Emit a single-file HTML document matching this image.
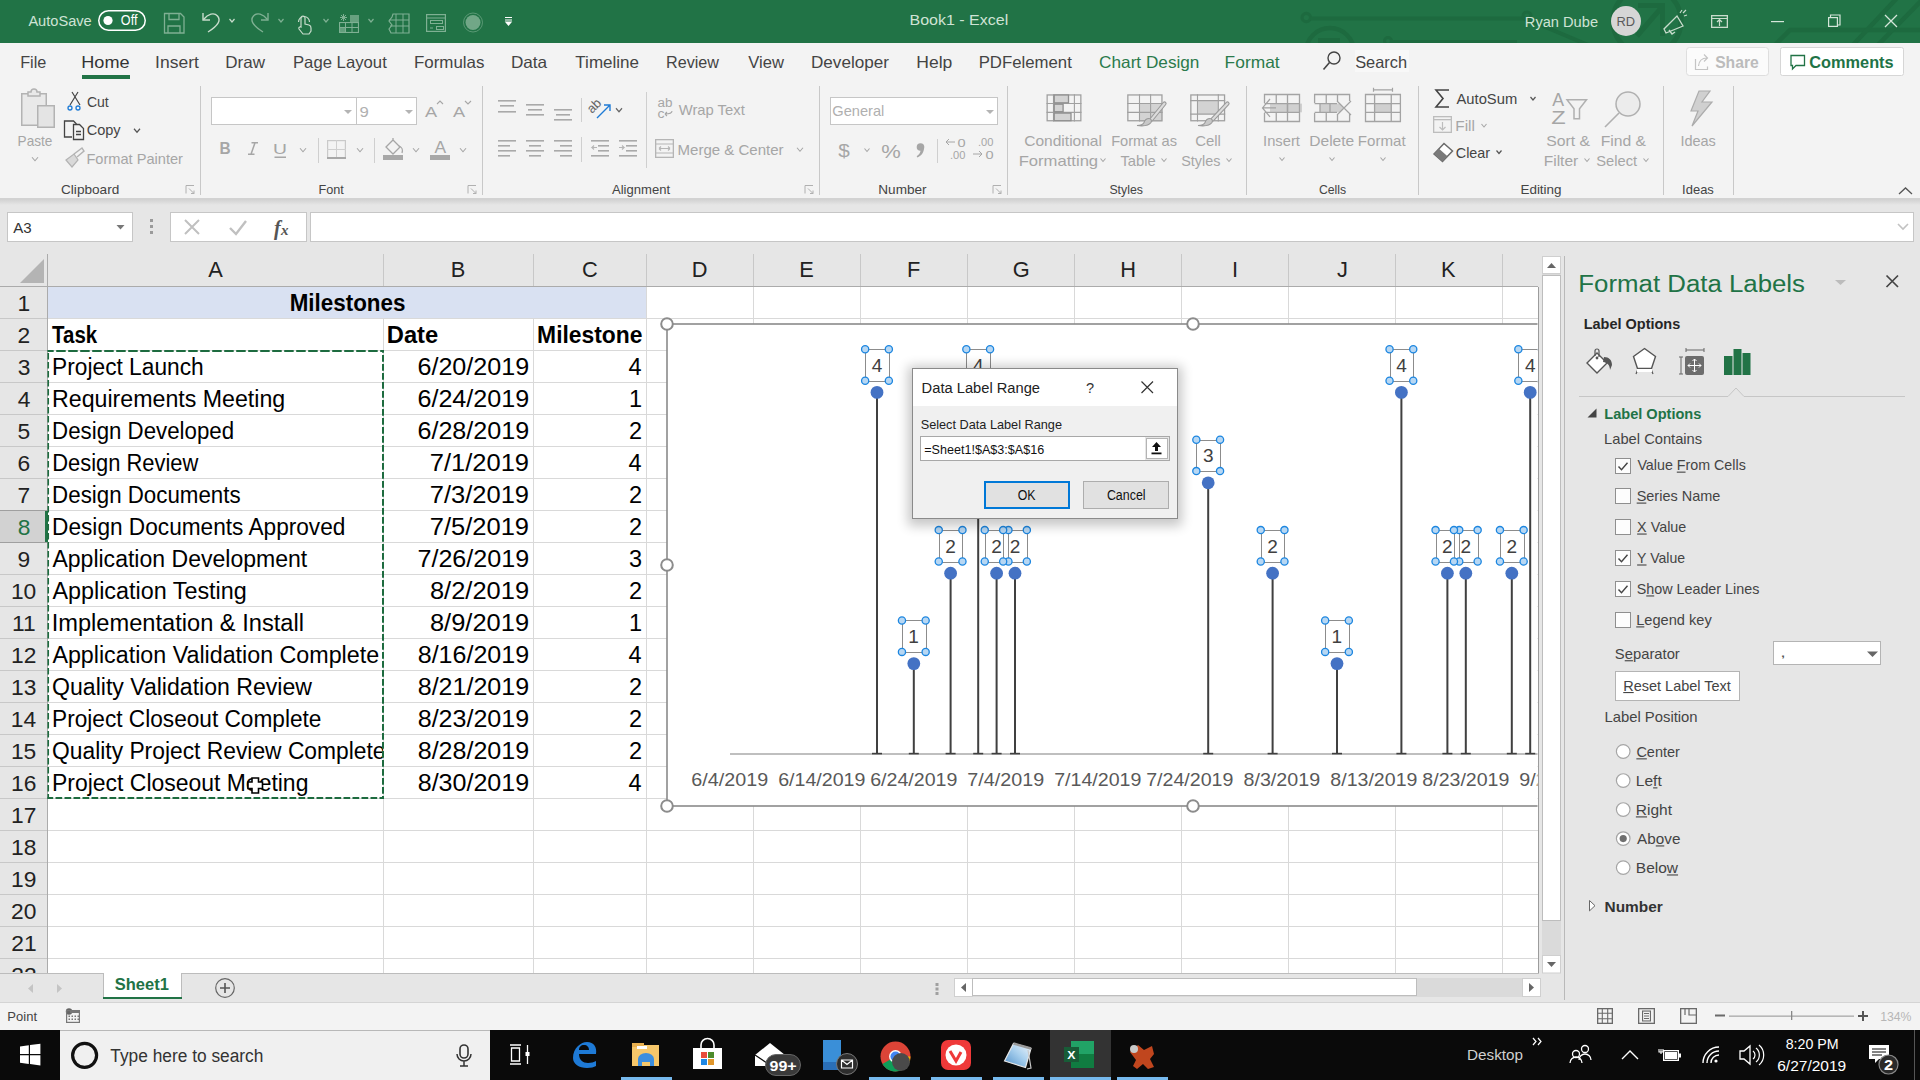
<!DOCTYPE html>
<html><head><meta charset="utf-8"><title>Excel</title>
<style>
html,body{margin:0;padding:0;width:1920px;height:1080px;overflow:hidden;background:#f3f3f3;}
svg{display:block;font-family:"Liberation Sans",sans-serif;}
text{font-family:"Liberation Sans",sans-serif;}
</style></head><body>
<svg width="1920" height="1080" viewBox="0 0 1920 1080">
<rect x="0" y="0" width="1920" height="1080" fill="#f3f3f3"/>
<rect x="0" y="0" width="1920" height="43" fill="#217346"/>
<clipPath id="tclip"><rect x="0" y="0" width="1920" height="43"/></clipPath><g clip-path="url(#tclip)">
<circle cx="1306.3" cy="17.5" r="4.2" fill="none" stroke="#1d6a3f" stroke-width="3.2"/>
<path d="M1310.5,18.5 H1525 L1600,50" stroke="#1d6a3f" fill="none" stroke-width="4"/>
<circle cx="1527" cy="16" r="4" fill="none" stroke="#1d6a3f" stroke-width="3"/>
<circle cx="1330" cy="52" r="24" fill="none" stroke="#1d6a3f" stroke-width="4.5"/>
<rect x="1318" y="38" width="22" height="6" fill="#1d6a3f"/>
<circle cx="1388" cy="41" r="3.5" fill="none" stroke="#1d6a3f" stroke-width="3"/>
<path d="M1392,42 H1517" stroke="#1d6a3f" fill="none" stroke-width="4"/>
<circle cx="1647" cy="21" r="34" fill="none" stroke="#1d6a3f" stroke-width="5"/>
<path d="M1637,36 L1662,7 M1638,5.5 H1665 M1662.5,4 V36" stroke="#1d6a3f" fill="none" stroke-width="5"/>
<path d="M1770,50 L1790,30 H1920" stroke="#1d6a3f" fill="none" stroke-width="4.5"/>
<path d="M1852,46 L1897,-2 M1877,46 L1921,1" stroke="#1d6a3f" fill="none" stroke-width="4.5"/>
</g>
<text x="28.40" y="25.70" font-size="15.5" fill="#cfe3d5" textLength="63.27" lengthAdjust="spacingAndGlyphs">AutoSave</text>
<rect x="98.75" y="10.75" width="46.5" height="19.5" rx="9.75" fill="none" stroke="#ffffff" stroke-width="1.5"/>
<circle cx="108" cy="20.5" r="4.6" fill="#ffffff" stroke="none" stroke-width="1"/>
<text x="120.87" y="25.20" font-size="14.5" fill="#ffffff" textLength="16.57" lengthAdjust="spacingAndGlyphs">Off</text>
<path d="M164.5,13.5 h16 l3.5,3.5 v16 h-19.5 z M169,13.5 v6 h10 v-6 M168,33 v-7 h12 v7" stroke="#7fb093" fill="none" stroke-width="1.3"/>
<path d="M203,13 v7 h7" stroke="#c8dccc" fill="none" stroke-width="1.4"/>
<path d="M203.5,19.5 C208,14 214,12 217.5,16 C221,20 219,25 208,32" stroke="#c8dccc" fill="none" stroke-width="1.4"/>
<path d="M229.5,19.0 L232,22.0 L234.5,19.0" stroke="#c8dccc" fill="none" stroke-width="1.2"/>
<path d="M268,13 v7 h-7" stroke="#7fb093" fill="none" stroke-width="1.4"/>
<path d="M267.5,19.5 C263,14 257,12 253.5,16 C250,20 252,25 263,32" stroke="#7fb093" fill="none" stroke-width="1.4"/>
<path d="M278.5,19.0 L281,22.0 L283.5,19.0" stroke="#7fb093" fill="none" stroke-width="1.2"/>
<path d="M301,27 v-9 a2,2 0 0 1 4,0 v6 l4,1 a3,3 0 0 1 2,3 v3 l-2,3 h-6 l-4,-5 a1.5,1.5 0 0 1 2,-2 z" stroke="#c8dccc" fill="none" stroke-width="1.2"/>
<path d="M298.5,22 a5.5,5.5 0 1 1 11,0" stroke="#c8dccc" fill="none" stroke-width="1.2"/>
<path d="M323.5,19.0 L326,22.0 L328.5,19.0" stroke="#7fb093" fill="none" stroke-width="1.2"/>
<path d="M343.5,14 v7 M340,17.5 h7 M341,15 l5,5 M346,15 l-5,5" stroke="#7fb093" fill="none" stroke-width="1"/>
<rect x="350" y="15" width="9" height="7" fill="#7fb093" opacity="0.75"/>
<rect x="339.55" y="22.55" width="18.9" height="9.9" fill="none" stroke="#7fb093" stroke-width="1.1"/>
<path d="M339,27.5 h20 M345.5,22 v11 M352,22 v11" stroke="#7fb093" fill="none" stroke-width="1"/>
<rect x="339.5" y="27.5" width="6" height="5" fill="#7fb093" opacity="0.7"/>
<path d="M368.5,19.0 L371,22.0 L373.5,19.0" stroke="#7fb093" fill="none" stroke-width="1.2"/>
<path d="M393,14 H409 V33 H391 L389,29 L392,25 L389,21 L392,17 Z" stroke="#7fb093" fill="none" stroke-width="1.2"/>
<path d="M389,20 h20 M390,26 h19 M396,14 v19 M403,14 v19" stroke="#7fb093" fill="none" stroke-width="1"/>
<rect x="426.6" y="14.6" width="18.8" height="16.8" fill="none" stroke="#7fb093" stroke-width="1.2"/>
<path d="M426,18 h20" stroke="#7fb093" fill="none" stroke-width="1"/>
<rect x="430.5" y="20.5" width="12" height="3" fill="none" stroke="#7fb093" stroke-width="1"/>
<rect x="436.5" y="26.5" width="7" height="3" fill="none" stroke="#7fb093" stroke-width="1"/>
<path d="M430,28 h3" stroke="#7fb093" fill="none" stroke-width="1"/>
<circle cx="473" cy="22.5" r="9.5" fill="none" stroke="#7fb093" stroke-width="1" opacity="0.6"/>
<circle cx="473" cy="22.5" r="7.5" fill="#7fb093" stroke="none" stroke-width="1" opacity="0.85"/>
<path d="M505,17.5 h7 M505,20 h7 M506,22 l2.5,3 l2.5,-3 z" stroke="#ffffff" fill="#ffffff" stroke-width="1.2"/>
<text x="909.53" y="25.10" font-size="15.5" fill="#cfe3d5" textLength="98.73" lengthAdjust="spacingAndGlyphs">Book1  -  Excel</text>
<text x="1524.83" y="27.30" font-size="15.5" fill="#cfe3d5" textLength="73.19" lengthAdjust="spacingAndGlyphs">Ryan Dube</text>
<circle cx="1626" cy="21" r="15" fill="#d6d6d6" stroke="none" stroke-width="1"/>
<text x="1616.47" y="26.00" font-size="12.5" fill="#5a5a5a" textLength="18.60" lengthAdjust="spacingAndGlyphs">RD</text>
<path d="M1666,33 l-2,-4 l13,-13 l6,10 z M1669,30 l3,4 l3,-2" stroke="#c8dccc" fill="none" stroke-width="1.3"/>
<path d="M1680,13 l2,-3 M1684,16 l3,-1 M1683,13 l3,-3" stroke="#c8dccc" fill="none" stroke-width="1.2"/>
<rect x="1711.65" y="15.65" width="15.7" height="11.7" fill="none" stroke="#c8dccc" stroke-width="1.3"/>
<path d="M1711,18.5 h17 M1719.5,26 v-6 M1717,22 l2.5,-2.5 l2.5,2.5" stroke="#c8dccc" fill="none" stroke-width="1.2"/>
<rect x="1771" y="21" width="13" height="1.2" fill="#d5e6da"/>
<rect x="1828.6" y="17.6" width="8.8" height="8.8" fill="none" stroke="#d5e6da" stroke-width="1.2"/>
<path d="M1830.5,17 v-2 h9.5 v10 h-2" stroke="#d5e6da" fill="none" stroke-width="1.2"/>
<path d="M1885,15 L1897,27 M1897,15 L1885,27" stroke="#d5e6da" fill="none" stroke-width="1.3"/>
<text x="20.20" y="68.20" font-size="16.5" fill="#444444" textLength="26.17" lengthAdjust="spacingAndGlyphs">File</text>
<text x="81.25" y="68.20" font-size="16.5" fill="#333" textLength="48.31" lengthAdjust="spacingAndGlyphs">Home</text>
<text x="155.12" y="68.20" font-size="16.5" fill="#444444" textLength="43.76" lengthAdjust="spacingAndGlyphs">Insert</text>
<text x="225.34" y="68.20" font-size="16.5" fill="#444444" textLength="39.72" lengthAdjust="spacingAndGlyphs">Draw</text>
<text x="292.96" y="68.20" font-size="16.5" fill="#444444" textLength="93.83" lengthAdjust="spacingAndGlyphs">Page Layout</text>
<text x="413.95" y="68.20" font-size="16.5" fill="#444444" textLength="70.51" lengthAdjust="spacingAndGlyphs">Formulas</text>
<text x="510.93" y="68.20" font-size="16.5" fill="#444444" textLength="36.24" lengthAdjust="spacingAndGlyphs">Data</text>
<text x="575.36" y="68.20" font-size="16.5" fill="#444444" textLength="63.65" lengthAdjust="spacingAndGlyphs">Timeline</text>
<text x="666.01" y="68.20" font-size="16.5" fill="#444444" textLength="52.97" lengthAdjust="spacingAndGlyphs">Review</text>
<text x="748.30" y="68.20" font-size="16.5" fill="#444444" textLength="35.69" lengthAdjust="spacingAndGlyphs">View</text>
<text x="810.93" y="68.20" font-size="16.5" fill="#444444" textLength="78.08" lengthAdjust="spacingAndGlyphs">Developer</text>
<text x="916.30" y="68.20" font-size="16.5" fill="#444444" textLength="36.04" lengthAdjust="spacingAndGlyphs">Help</text>
<text x="978.66" y="68.20" font-size="16.5" fill="#444444" textLength="93.16" lengthAdjust="spacingAndGlyphs">PDFelement</text>
<rect x="82" y="75" width="48" height="4" fill="#217346"/>
<text x="1099.14" y="68.20" font-size="16.5" fill="#2b7a4b" textLength="100.29" lengthAdjust="spacingAndGlyphs">Chart Design</text>
<text x="1224.61" y="68.20" font-size="16.5" fill="#2b7a4b" textLength="55.01" lengthAdjust="spacingAndGlyphs">Format</text>
<circle cx="1334" cy="58" r="6" fill="none" stroke="#444" stroke-width="1.4"/>
<path d="M1329.5,62.5 L1323.5,69.5" stroke="#444" fill="none" stroke-width="1.6"/>
<rect x="1355" y="50" width="54" height="22" fill="#f8f8f8"/>
<text x="1355.18" y="68.20" font-size="16.5" fill="#444" textLength="51.94" lengthAdjust="spacingAndGlyphs">Search</text>
<rect x="1686.5" y="47.5" width="82" height="28" rx="3" fill="#fbfbfb" stroke="#dedede"/>
<path d="M1695.5,59 v10.5 h12 v-3" stroke="#c4c4c4" fill="none" stroke-width="1.2"/>
<path d="M1698.5,66 c0.5,-5 3,-8 8.5,-8 M1704,54.5 l3.5,3.5 l-3.5,3.5" stroke="#c4c4c4" fill="none" stroke-width="1.2"/>
<text x="1715.13" y="68.20" font-size="16.5" fill="#bcbcbc" font-weight="bold" textLength="43.59" lengthAdjust="spacingAndGlyphs">Share</text>
<rect x="1780.5" y="47.5" width="123" height="28" rx="2" fill="#ffffff" stroke="#d6d6d6"/>
<path d="M1791,55.5 h13.5 v10 h-8.5 l-3.5,3.5 v-3.5 h-1.5 z" stroke="#217346" fill="none" stroke-width="1.3"/>
<text x="1809.35" y="68.20" font-size="16.5" fill="#217346" font-weight="bold" textLength="84.26" lengthAdjust="spacingAndGlyphs">Comments</text>
<rect x="200" y="86" width="1" height="109" fill="#c8c8c8"/>
<rect x="482" y="86" width="1" height="109" fill="#c8c8c8"/>
<rect x="819" y="86" width="1" height="109" fill="#c8c8c8"/>
<rect x="1007" y="86" width="1" height="109" fill="#c8c8c8"/>
<rect x="1246" y="86" width="1" height="109" fill="#c8c8c8"/>
<rect x="1418" y="86" width="1" height="109" fill="#c8c8c8"/>
<rect x="1663" y="86" width="1" height="109" fill="#c8c8c8"/>
<rect x="1733" y="86" width="1" height="109" fill="#c8c8c8"/>
<text x="61.02" y="193.50" font-size="12.8" fill="#444444" textLength="58.23" lengthAdjust="spacingAndGlyphs">Clipboard</text>
<text x="318.48" y="193.50" font-size="12.8" fill="#444444" textLength="25.40" lengthAdjust="spacingAndGlyphs">Font</text>
<text x="612.00" y="193.50" font-size="12.8" fill="#444444" textLength="58.09" lengthAdjust="spacingAndGlyphs">Alignment</text>
<text x="878.31" y="193.50" font-size="12.8" fill="#444444" textLength="48.31" lengthAdjust="spacingAndGlyphs">Number</text>
<text x="1109.38" y="193.50" font-size="12.8" fill="#444444" textLength="33.52" lengthAdjust="spacingAndGlyphs">Styles</text>
<text x="1318.89" y="193.50" font-size="12.8" fill="#444444" textLength="27.21" lengthAdjust="spacingAndGlyphs">Cells</text>
<text x="1520.42" y="193.50" font-size="12.8" fill="#444444" textLength="41.19" lengthAdjust="spacingAndGlyphs">Editing</text>
<text x="1682.13" y="193.50" font-size="12.8" fill="#444444" textLength="31.70" lengthAdjust="spacingAndGlyphs">Ideas</text>
<path d="M186,193.5 v-8 h8" stroke="#b0b0b0" fill="none" stroke-width="1"/>
<path d="M189,188.5 l5,5 M194,190.5 v3 h-3" stroke="#b0b0b0" fill="none" stroke-width="1"/>
<path d="M468,193.5 v-8 h8" stroke="#b0b0b0" fill="none" stroke-width="1"/>
<path d="M471,188.5 l5,5 M476,190.5 v3 h-3" stroke="#b0b0b0" fill="none" stroke-width="1"/>
<path d="M805,193.5 v-8 h8" stroke="#b0b0b0" fill="none" stroke-width="1"/>
<path d="M808,188.5 l5,5 M813,190.5 v3 h-3" stroke="#b0b0b0" fill="none" stroke-width="1"/>
<path d="M993,193.5 v-8 h8" stroke="#b0b0b0" fill="none" stroke-width="1"/>
<path d="M996,188.5 l5,5 M1001,190.5 v3 h-3" stroke="#b0b0b0" fill="none" stroke-width="1"/>
<path d="M1899,194 l6.5,-6 l6.5,6" stroke="#555" fill="none" stroke-width="1.3"/>
<rect x="21.75" y="93.75" width="24.5" height="31.5" fill="#e9e9e9" stroke="#b3b3b3" stroke-width="1.5"/>
<path d="M28,96 h12 v-4 h-3 a3,3 0 0 0 -6,0 h-3 z" stroke="#b3b3b3" fill="#e9e9e9" stroke-width="1.5"/>
<rect x="37.75" y="105.75" width="16.5" height="21.5" fill="#e4e4e4" stroke="#b3b3b3" stroke-width="1.5"/>
<text x="17.61" y="145.50" font-size="14.5" fill="#a6a6a6" textLength="34.73" lengthAdjust="spacingAndGlyphs">Paste</text>
<path d="M32.0,157.25 L35,160.75 L38.0,157.25" stroke="#a6a6a6" fill="none" stroke-width="1.1"/>
<path d="M72,92 L80,105 M78,92 L70,105" stroke="#444" fill="none" stroke-width="1.2"/>
<circle cx="70" cy="108" r="2" fill="none" stroke="#1e7bd6" stroke-width="1.3"/>
<circle cx="78" cy="108" r="2" fill="none" stroke="#1e7bd6" stroke-width="1.3"/>
<text x="86.90" y="106.70" font-size="14.5" fill="#444444" textLength="21.89" lengthAdjust="spacingAndGlyphs">Cut</text>
<path d="M72,137 h-7.5 v-16 h9 l3,3" stroke="#444" fill="none" stroke-width="1.3"/>
<path d="M73.5,124.5 h6 l4,4 v11 h-10 z M76,131.5 h5 M76,134.5 h5" stroke="#444" fill="#f3f3f3" stroke-width="1.3"/>
<text x="86.67" y="135.20" font-size="14.5" fill="#444444" textLength="33.99" lengthAdjust="spacingAndGlyphs">Copy</text>
<path d="M134.0,128.75 L137,132.25 L140.0,128.75" stroke="#555" fill="none" stroke-width="1.2"/>
<path d="M66,160 l8,-6 l4,6 l-6,7 z" stroke="#b3b3b3" fill="#d9d9d9" stroke-width="1.2"/>
<path d="M74,154 l8,-6 l2,3 l-7,6" stroke="#b3b3b3" fill="none" stroke-width="1.4"/>
<text x="86.43" y="164.40" font-size="14.5" fill="#a6a6a6" textLength="96.56" lengthAdjust="spacingAndGlyphs">Format Painter</text>
<rect x="211.5" y="97.5" width="145" height="27" fill="#ffffff" stroke="#c6c6c6" stroke-width="1"/>
<rect x="356.5" y="97.5" width="60" height="27" fill="#ffffff" stroke="#c6c6c6" stroke-width="1"/>
<path d="M344,110 h8 l-4,4 z" stroke="none" fill="#b4b4b4" stroke-width="1"/>
<path d="M405,110 h8 l-4,4 z" stroke="none" fill="#b4b4b4" stroke-width="1"/>
<text x="359.46" y="116.50" font-size="14.5" fill="#b0b0b0" textLength="9.31" lengthAdjust="spacingAndGlyphs">9</text>
<text x="425.00" y="116.50" font-size="15.5" fill="#a6a6a6" textLength="12.13" lengthAdjust="spacingAndGlyphs">A</text>
<path d="M437,104 l3,-3 l3,3" stroke="#a6a6a6" fill="none" stroke-width="1.1"/>
<text x="453.00" y="116.50" font-size="15.5" fill="#a6a6a6" textLength="12.13" lengthAdjust="spacingAndGlyphs">A</text>
<path d="M465,101 l3,3 l3,-3" stroke="#a6a6a6" fill="none" stroke-width="1.1"/>
<text x="219.52" y="154.40" font-size="16.5" fill="#a6a6a6" font-weight="bold" textLength="11.13" lengthAdjust="spacingAndGlyphs">B</text>
<path d="M251.5,142.8 H258 M248,154.3 H254.5 M255,142.8 L251,154.3" stroke="#a6a6a6" fill="none" stroke-width="1.5"/>
<text x="272.96" y="154.00" font-size="15" fill="#a6a6a6" textLength="13.94" lengthAdjust="spacingAndGlyphs">U</text>
<rect x="274.5" y="156.5" width="11.5" height="1.5" fill="#a6a6a6"/>
<path d="M300.0,148.25 L303,151.75 L306.0,148.25" stroke="#a6a6a6" fill="none" stroke-width="1.1"/>
<rect x="318" y="138" width="1" height="25" fill="#cfcfcf"/>
<rect x="327.6" y="140.6" width="17.8" height="17.8" fill="none" stroke="#c9c9c9" stroke-width="1.2"/>
<path d="M336.5,140 v19 M327,149.5 h19" stroke="#cfcfcf" fill="none" stroke-width="1"/>
<rect x="327" y="157" width="19" height="2" fill="#a8a8a8"/>
<path d="M357.0,148.25 L360,151.75 L363.0,148.25" stroke="#a6a6a6" fill="none" stroke-width="1.1"/>
<rect x="374" y="138" width="1" height="25" fill="#cfcfcf"/>
<path d="M386,147 l7,-7 l7,7 l-7,7 z M393,140 v-2" stroke="#a6a6a6" fill="none" stroke-width="1.3"/>
<path d="M399,146 c3,1 4,4 3,7" stroke="#a6a6a6" fill="none" stroke-width="1.3"/>
<rect x="383" y="155" width="20" height="5" fill="#a8a8a8"/>
<path d="M413.0,148.25 L416,151.75 L419.0,148.25" stroke="#a6a6a6" fill="none" stroke-width="1.1"/>
<text x="434.50" y="153.00" font-size="17" fill="#a6a6a6" textLength="11.62" lengthAdjust="spacingAndGlyphs">A</text>
<rect x="430" y="155" width="20" height="5" fill="#a8a8a8"/>
<path d="M460.0,148.25 L463,151.75 L466.0,148.25" stroke="#a6a6a6" fill="none" stroke-width="1.1"/>
<rect x="498" y="100" width="18" height="1.6" fill="#a9a9a9"/>
<rect x="500" y="105" width="14" height="1.6" fill="#a9a9a9"/>
<rect x="498" y="111" width="18" height="1.6" fill="#a9a9a9"/>
<rect x="526" y="104" width="18" height="1.6" fill="#a9a9a9"/>
<rect x="528" y="109" width="14" height="1.6" fill="#a9a9a9"/>
<rect x="526" y="114" width="18" height="1.6" fill="#a9a9a9"/>
<rect x="554" y="109" width="18" height="1.6" fill="#a9a9a9"/>
<rect x="556" y="114" width="14" height="1.6" fill="#a9a9a9"/>
<rect x="554" y="119" width="18" height="1.6" fill="#a9a9a9"/>
<rect x="581" y="98" width="1" height="24" fill="#cfcfcf"/>
<text x="0" y="0" font-size="13" fill="#666" transform="translate(592,114) rotate(-45)">ab</text>
<path d="M597,118 L610,105 M604,105 h6 v6" stroke="#1e7bd6" fill="none" stroke-width="1.4"/>
<path d="M616.0,108.25 L619,111.75 L622.0,108.25" stroke="#666" fill="none" stroke-width="1.2"/>
<rect x="646" y="92" width="1" height="76" fill="#cfcfcf"/>
<rect x="498" y="140" width="18" height="1.6" fill="#a9a9a9"/>
<rect x="498" y="145" width="12" height="1.6" fill="#a9a9a9"/>
<rect x="498" y="150" width="18" height="1.6" fill="#a9a9a9"/>
<rect x="498" y="155" width="12" height="1.6" fill="#a9a9a9"/>
<rect x="526" y="140" width="18" height="1.6" fill="#a9a9a9"/>
<rect x="529" y="145" width="12" height="1.6" fill="#a9a9a9"/>
<rect x="526" y="150" width="18" height="1.6" fill="#a9a9a9"/>
<rect x="529" y="155" width="12" height="1.6" fill="#a9a9a9"/>
<rect x="554" y="140" width="18" height="1.6" fill="#a9a9a9"/>
<rect x="560" y="145" width="12" height="1.6" fill="#a9a9a9"/>
<rect x="554" y="150" width="18" height="1.6" fill="#a9a9a9"/>
<rect x="560" y="155" width="12" height="1.6" fill="#a9a9a9"/>
<rect x="581" y="137" width="1" height="25" fill="#cfcfcf"/>
<rect x="591" y="140" width="18" height="1.6" fill="#a9a9a9"/>
<rect x="598" y="145" width="11" height="1.6" fill="#a9a9a9"/>
<rect x="598" y="150" width="11" height="1.6" fill="#a9a9a9"/>
<rect x="591" y="155" width="18" height="1.6" fill="#a9a9a9"/>
<path d="M597,147.5 h-5 l2,-2 M592,147.5 l2,2" stroke="#b5b5b5" fill="none" stroke-width="1.1"/>
<rect x="619" y="140" width="18" height="1.6" fill="#a9a9a9"/>
<rect x="626" y="145" width="11" height="1.6" fill="#a9a9a9"/>
<rect x="626" y="150" width="11" height="1.6" fill="#a9a9a9"/>
<rect x="619" y="155" width="18" height="1.6" fill="#a9a9a9"/>
<path d="M619,147.5 h5 l-2,-2 M624,147.5 l-2,2" stroke="#b5b5b5" fill="none" stroke-width="1.1"/>
<text x="657.46" y="107.00" font-size="12" fill="#a6a6a6" textLength="14.97" lengthAdjust="spacingAndGlyphs">ab</text>
<text x="657.44" y="118.00" font-size="12" fill="#a6a6a6" textLength="6.98" lengthAdjust="spacingAndGlyphs">c</text>
<path d="M665,114 c3,0 7,0 7,-3 M665,114 l2,-2 M665,114 l2,2" stroke="#a6a6a6" fill="none" stroke-width="1.1"/>
<text x="678.70" y="115.20" font-size="14.5" fill="#a6a6a6" textLength="66.07" lengthAdjust="spacingAndGlyphs">Wrap Text</text>
<rect x="655.65" y="139.65" width="17.7" height="17.7" fill="none" stroke="#b5b5b5" stroke-width="1.3"/>
<path d="M655,144 h19 M655,153 h19 M659,148.5 h11 M659,148.5 l2,-2 M659,148.5 l2,2 M670,148.5 l-2,-2 M670,148.5 l-2,2" stroke="#b5b5b5" fill="none" stroke-width="1.1"/>
<text x="677.50" y="154.90" font-size="14.5" fill="#a6a6a6" textLength="106.13" lengthAdjust="spacingAndGlyphs">Merge &amp; Center</text>
<path d="M797.0,147.75 L800,151.25 L803.0,147.75" stroke="#a6a6a6" fill="none" stroke-width="1.1"/>
<rect x="830.5" y="97.5" width="167" height="27" fill="#ffffff" stroke="#c6c6c6" stroke-width="1"/>
<text x="832.27" y="116.20" font-size="14.5" fill="#b0b0b0" textLength="52.07" lengthAdjust="spacingAndGlyphs">General</text>
<path d="M986,110 h8 l-4,4 z" stroke="none" fill="#b4b4b4" stroke-width="1"/>
<text x="838.29" y="157.00" font-size="17.5" fill="#a6a6a6" textLength="11.54" lengthAdjust="spacingAndGlyphs">$</text>
<path d="M864.5,148.5 L867,151.5 L869.5,148.5" stroke="#a6a6a6" fill="none" stroke-width="1.1"/>
<text x="881.34" y="158.00" font-size="17.5" fill="#a6a6a6" textLength="19.52" lengthAdjust="spacingAndGlyphs">%</text>
<circle cx="920.5" cy="147" r="3.8" fill="#a6a6a6" stroke="none" stroke-width="1"/>
<path d="M923.8,147.5 c0.5,4.5 -2,8 -6.5,10 l-0.6,-1.2 c2.8,-1.8 4,-4 3.8,-6.5 z" stroke="none" fill="#a6a6a6" stroke-width="1"/>
<rect x="937" y="139" width="1" height="24" fill="#cfcfcf"/>
<text x="950.00" y="159.00" font-size="11" fill="#a6a6a6" textLength="15.44" lengthAdjust="spacingAndGlyphs">.00</text>
<text x="957.42" y="147.00" font-size="11" fill="#a6a6a6" textLength="8.11" lengthAdjust="spacingAndGlyphs">0</text>
<path d="M946,142 h9 M946,142 l3,-3 M946,142 l3,3" stroke="#a6a6a6" fill="none" stroke-width="1"/>
<text x="978.00" y="146.00" font-size="11" fill="#a6a6a6" textLength="15.44" lengthAdjust="spacingAndGlyphs">.00</text>
<text x="985.42" y="159.00" font-size="11" fill="#a6a6a6" textLength="8.11" lengthAdjust="spacingAndGlyphs">0</text>
<path d="M973,154 h9 M982,154 l-3,-3 M982,154 l-3,3" stroke="#a6a6a6" fill="none" stroke-width="1"/>
<rect x="1047.15" y="94.95" width="33.7" height="25.8" fill="none" stroke="#a0a0a0" stroke-width="1.3"/>
<path d="M1053.5,94.3 V121.4 M1074.4,94.3 V121.4 M1046.5,103.5 H1081.5 M1046.5,112.4 H1081.5" stroke="#a0a0a0" fill="none" stroke-width="1.1"/>
<rect x="1054.2" y="95.0" width="14.3" height="7.8" fill="#d3d3d3" stroke="#8f8f8f" stroke-width="1.3"/>
<rect x="1054.2" y="104.2" width="8.9" height="7.5" fill="#d3d3d3" stroke="#8f8f8f" stroke-width="1.3"/>
<rect x="1054.2" y="113.10000000000001" width="16.8" height="7.6" fill="#d3d3d3" stroke="#8f8f8f" stroke-width="1.3"/>
<text x="1024.22" y="146.00" font-size="14.5" fill="#a6a6a6" textLength="77.76" lengthAdjust="spacingAndGlyphs">Conditional</text>
<text x="1018.67" y="165.50" font-size="14.5" fill="#a6a6a6" textLength="79.48" lengthAdjust="spacingAndGlyphs">Formatting</text>
<path d="M1100.5,158.5 L1103,161.5 L1105.5,158.5" stroke="#a6a6a6" fill="none" stroke-width="1.1"/>
<rect x="1139.5" y="103.5" width="23" height="18" fill="#d3d3d3"/>
<rect x="1127.8500000000001" y="94.95" width="34.1" height="25.8" fill="none" stroke="#a0a0a0" stroke-width="1.3"/>
<path d="M1139.5,94.3 V121.4 M1150.6,94.3 V121.4 M1127.2,103.5 H1162.6 M1127.2,112.4 H1162.6" stroke="#a0a0a0" fill="none" stroke-width="1.1"/>
<path d="M1164.5,103.5 L1151.5,119.5" stroke="#9a9a9a" fill="none" stroke-width="4.2" stroke-linecap="round"/>
<path d="M1164.5,103.5 L1151.5,119.5" stroke="#dcdcdc" fill="none" stroke-width="2" stroke-linecap="round"/>
<path d="M1137,125.5 c4,0 6,-1 7,-3 c1,-3 3,-4 5,-4 c2,0 3,2 2,4 c-2,3 -6,4 -14,3 z" stroke="#9a9a9a" fill="#c8c8c8" stroke-width="1.1"/>
<text x="1111.13" y="146.00" font-size="14.5" fill="#a6a6a6" textLength="65.82" lengthAdjust="spacingAndGlyphs">Format as</text>
<text x="1120.40" y="165.50" font-size="14.5" fill="#a6a6a6" textLength="35.34" lengthAdjust="spacingAndGlyphs">Table</text>
<path d="M1161.5,158.5 L1164,161.5 L1166.5,158.5" stroke="#a6a6a6" fill="none" stroke-width="1.1"/>
<rect x="1197.5" y="100.6" width="21" height="13.5" fill="#d3d3d3"/>
<rect x="1190.8500000000001" y="94.95" width="33.7" height="25.8" fill="none" stroke="#a0a0a0" stroke-width="1.3"/>
<path d="M1197.5,94.3 V121.4 M1218.3,94.3 V121.4 M1190.2,100.6 H1225.2 M1190.2,114.1 H1225.2" stroke="#a0a0a0" fill="none" stroke-width="1.1"/>
<path d="M1227.5,103.5 L1212.5,119.5" stroke="#9a9a9a" fill="none" stroke-width="4.2" stroke-linecap="round"/>
<path d="M1227.5,103.5 L1212.5,119.5" stroke="#dcdcdc" fill="none" stroke-width="2" stroke-linecap="round"/>
<path d="M1198,125.5 c4,0 6,-1 7,-3 c1,-3 3,-4 5,-4 c2,0 3,2 2,4 c-2,3 -6,4 -14,3 z" stroke="#9a9a9a" fill="#c8c8c8" stroke-width="1.1"/>
<text x="1195.25" y="146.00" font-size="14.5" fill="#a6a6a6" textLength="25.68" lengthAdjust="spacingAndGlyphs">Cell</text>
<text x="1181.28" y="165.50" font-size="14.5" fill="#a6a6a6" textLength="39.20" lengthAdjust="spacingAndGlyphs">Styles</text>
<path d="M1226.5,158.5 L1229,161.5 L1231.5,158.5" stroke="#a6a6a6" fill="none" stroke-width="1.1"/>
<rect x="1270" y="103.6" width="32" height="8.7" fill="#d0d0d0"/>
<path d="M1264.5,103 V94.5 H1299.5 V121.5 H1264.5 V113 M1276.25,94.5 V103.6 M1276.25,112.3 V121.5 M1287.5,94.5 V121.5 M1264.5,103.6 H1299.5 M1264.5,112.3 H1299.5" stroke="#a3a3a3" fill="none" stroke-width="1.3"/>
<path d="M1270,99 L1262.5,107.9 L1270,116.8 M1263,107.9 H1276" stroke="#a3a3a3" fill="none" stroke-width="1.2"/>
<path d="M1287.5,103.6 V112.3" stroke="#a3a3a3" fill="none" stroke-width="1.3"/>
<rect x="1320" y="103.6" width="20" height="8.7" fill="#d0d0d0"/>
<path d="M1340,103.6 L1344,107.9 L1340,112.3 Z" stroke="none" fill="#d0d0d0" stroke-width="1"/>
<path d="M1314.6,103 V94.5 H1349.6 V101 M1349.6,114 V121.5 H1314.6 V113 M1326.25,94.5 V103.6 M1326.25,112.3 V121.5 M1337.5,94.5 V101 M1337.5,115 V121.5 M1314.6,103.6 H1337 M1314.6,112.3 H1337 M1320,103.6 V112.3 M1330,103.6 V112.3" stroke="#a3a3a3" fill="none" stroke-width="1.3"/>
<path d="M1337,101 L1351,115 M1351,101 L1337,115" stroke="#a3a3a3" fill="none" stroke-width="1.2"/>
<rect x="1374.6" y="103.6" width="16.6" height="8.7" fill="#d0d0d0"/>
<path d="M1365.5,94.5 H1400.4 V121.5 H1365.5 Z M1374.6,94.5 V121.5 M1391.25,94.5 V121.5 M1365.5,103.6 H1400.4 M1365.5,112.3 H1400.4" stroke="#a3a3a3" fill="none" stroke-width="1.3"/>
<path d="M1373.5,89.8 H1392.5 M1373.5,87.8 V91.8 M1392.5,87.8 V91.8" stroke="#a3a3a3" fill="none" stroke-width="1.2"/>
<text x="1263.07" y="146.00" font-size="14.5" fill="#a6a6a6" textLength="36.83" lengthAdjust="spacingAndGlyphs">Insert</text>
<path d="M1279.5,157.5 L1282,160.5 L1284.5,157.5" stroke="#a6a6a6" fill="none" stroke-width="1.1"/>
<text x="1309.25" y="146.00" font-size="14.5" fill="#a6a6a6" textLength="45.03" lengthAdjust="spacingAndGlyphs">Delete</text>
<path d="M1329.5,157.5 L1332,160.5 L1334.5,157.5" stroke="#a6a6a6" fill="none" stroke-width="1.1"/>
<text x="1357.79" y="146.00" font-size="14.5" fill="#a6a6a6" textLength="47.81" lengthAdjust="spacingAndGlyphs">Format</text>
<path d="M1380.5,157.5 L1383,160.5 L1385.5,157.5" stroke="#a6a6a6" fill="none" stroke-width="1.1"/>
<path d="M1449,90 h-13 l7,8.5 l-7,8.5 h13" stroke="#444" fill="none" stroke-width="1.6"/>
<text x="1456.50" y="104.00" font-size="14.5" fill="#444444" textLength="60.73" lengthAdjust="spacingAndGlyphs">AutoSum</text>
<path d="M1530.5,97.0 L1533,100.0 L1535.5,97.0" stroke="#555" fill="none" stroke-width="1.2"/>
<rect x="1433.65" y="116.65" width="17.7" height="15.7" fill="none" stroke="#bdbdbd" stroke-width="1.3"/>
<rect x="1433" y="119" width="19" height="1.3" fill="#bdbdbd"/>
<path d="M1442.5,122 v8 M1439.5,127 l3,3 l3,-3" stroke="#bdbdbd" fill="none" stroke-width="1.2"/>
<text x="1455.27" y="130.80" font-size="14.5" fill="#a6a6a6" textLength="19.61" lengthAdjust="spacingAndGlyphs">Fill</text>
<path d="M1481.5,124.0 L1484,127.0 L1486.5,124.0" stroke="#a6a6a6" fill="none" stroke-width="1.1"/>
<path d="M1434,154 l10,-10.5 l8.5,7.5 l-10,10.5 z" stroke="#6a6a6a" fill="#ffffff" stroke-width="1.5"/>
<path d="M1434,154 l5,-5.2 l8.5,7.5 l-5,5.2 z" stroke="none" fill="#7a7a7a" stroke-width="1"/>
<text x="1455.78" y="157.70" font-size="14.5" fill="#444444" textLength="34.36" lengthAdjust="spacingAndGlyphs">Clear</text>
<path d="M1496.5,150.5 L1499,153.5 L1501.5,150.5" stroke="#555" fill="none" stroke-width="1.2"/>
<text x="1552.30" y="106.20" font-size="19" fill="#a6a6a6" textLength="11.82" lengthAdjust="spacingAndGlyphs">A</text>
<text x="1551.29" y="124.00" font-size="19" fill="#a6a6a6" textLength="14.44" lengthAdjust="spacingAndGlyphs">Z</text>
<path d="M1567,99.7 h19.5 l-7,9 v10 h-5.5 v-10 z" stroke="#b0b0b0" fill="none" stroke-width="1.5"/>
<text x="1546.21" y="146.00" font-size="14.5" fill="#a6a6a6" textLength="43.89" lengthAdjust="spacingAndGlyphs">Sort &amp;</text>
<text x="1543.76" y="165.50" font-size="14.5" fill="#a6a6a6" textLength="34.43" lengthAdjust="spacingAndGlyphs">Filter</text>
<path d="M1584.5,158.5 L1587,161.5 L1589.5,158.5" stroke="#a6a6a6" fill="none" stroke-width="1.1"/>
<circle cx="1628" cy="104" r="12" fill="#ececec" stroke="#b0b0b0" stroke-width="1.5"/>
<path d="M1619,113 L1605,127" stroke="#b0b0b0" fill="none" stroke-width="1.6"/>
<text x="1600.74" y="146.00" font-size="14.5" fill="#a6a6a6" textLength="45.37" lengthAdjust="spacingAndGlyphs">Find &amp;</text>
<text x="1596.26" y="165.50" font-size="14.5" fill="#a6a6a6" textLength="40.87" lengthAdjust="spacingAndGlyphs">Select</text>
<path d="M1643.5,158.5 L1646,161.5 L1648.5,158.5" stroke="#a6a6a6" fill="none" stroke-width="1.1"/>
<path d="M1699,91 h11 l-8,11 h10 l-20,24 l6,-15 h-7 z" stroke="#acacac" fill="#d0d0d0" stroke-width="1.2"/>
<text x="1680.39" y="145.60" font-size="14.5" fill="#a6a6a6" textLength="35.48" lengthAdjust="spacingAndGlyphs">Ideas</text>
<rect x="0" y="199" width="1920" height="88" fill="#e6e6e6"/>
<defs><linearGradient id="rsh" x1="0" y1="0" x2="0" y2="1"><stop offset="0" stop-color="#d0d0d0"/><stop offset="1" stop-color="#e6e6e6"/></linearGradient></defs>
<rect x="0" y="198" width="1920" height="1" fill="#d2d2d2"/>
<rect x="0" y="199" width="1920" height="6" fill="url(#rsh)"/>
<rect x="7.5" y="212.5" width="125" height="29" fill="#ffffff" stroke="#c6c6c6" stroke-width="1"/>
<text x="13.30" y="232.60" font-size="15" fill="#333" textLength="18.45" lengthAdjust="spacingAndGlyphs">A3</text>
<path d="M116.5,225 L124.5,225 L120.5,229.5 Z" stroke="none" fill="#777" stroke-width="1"/>
<rect x="150" y="219" width="3" height="3" fill="#9a9a9a"/>
<rect x="150" y="225" width="3" height="3" fill="#9a9a9a"/>
<rect x="150" y="231" width="3" height="3" fill="#9a9a9a"/>
<rect x="170.5" y="212.5" width="136" height="29" fill="#ffffff" stroke="#c6c6c6" stroke-width="1"/>
<path d="M185,220 L199,234 M199,220 L185,234" stroke="#c0c0c0" fill="none" stroke-width="2"/>
<path d="M230,228 L236,234 L246,221" stroke="#c0c0c0" fill="none" stroke-width="2.4"/>
<text x="274" y="235" font-size="20" font-style="italic" fill="#555" style="font-family:Liberation Serif,serif;font-weight:bold">f</text>
<text x="281" y="235" font-size="15" font-style="italic" fill="#555" style="font-family:Liberation Serif,serif;font-weight:bold">x</text>
<rect x="310.5" y="212.5" width="1603" height="29" fill="#ffffff" stroke="#c6c6c6" stroke-width="1"/>
<path d="M1898,224 L1903,229 L1908,224" stroke="#c2c2c2" fill="none" stroke-width="1.6"/>
<rect x="0" y="254" width="1538" height="33" fill="#e6e6e6"/>
<rect x="0" y="287" width="47" height="686" fill="#e6e6e6"/>
<rect x="48" y="287" width="1490" height="686" fill="#ffffff"/>
<rect x="48" y="287" width="598" height="31" fill="#d9e1f2"/>
<rect x="48" y="318" width="1490" height="1" fill="#d9d9d9"/>
<rect x="48" y="350" width="1490" height="1" fill="#d9d9d9"/>
<rect x="48" y="382" width="1490" height="1" fill="#d9d9d9"/>
<rect x="48" y="414" width="1490" height="1" fill="#d9d9d9"/>
<rect x="48" y="446" width="1490" height="1" fill="#d9d9d9"/>
<rect x="48" y="478" width="1490" height="1" fill="#d9d9d9"/>
<rect x="48" y="510" width="1490" height="1" fill="#d9d9d9"/>
<rect x="48" y="542" width="1490" height="1" fill="#d9d9d9"/>
<rect x="48" y="574" width="1490" height="1" fill="#d9d9d9"/>
<rect x="48" y="606" width="1490" height="1" fill="#d9d9d9"/>
<rect x="48" y="638" width="1490" height="1" fill="#d9d9d9"/>
<rect x="48" y="670" width="1490" height="1" fill="#d9d9d9"/>
<rect x="48" y="702" width="1490" height="1" fill="#d9d9d9"/>
<rect x="48" y="734" width="1490" height="1" fill="#d9d9d9"/>
<rect x="48" y="766" width="1490" height="1" fill="#d9d9d9"/>
<rect x="48" y="798" width="1490" height="1" fill="#d9d9d9"/>
<rect x="48" y="830" width="1490" height="1" fill="#d9d9d9"/>
<rect x="48" y="862" width="1490" height="1" fill="#d9d9d9"/>
<rect x="48" y="894" width="1490" height="1" fill="#d9d9d9"/>
<rect x="48" y="926" width="1490" height="1" fill="#d9d9d9"/>
<rect x="48" y="958" width="1490" height="1" fill="#d9d9d9"/>
<rect x="383" y="287" width="1" height="686" fill="#d9d9d9"/>
<rect x="533" y="287" width="1" height="686" fill="#d9d9d9"/>
<rect x="646" y="287" width="1" height="686" fill="#d9d9d9"/>
<rect x="753" y="287" width="1" height="686" fill="#d9d9d9"/>
<rect x="860" y="287" width="1" height="686" fill="#d9d9d9"/>
<rect x="967" y="287" width="1" height="686" fill="#d9d9d9"/>
<rect x="1074" y="287" width="1" height="686" fill="#d9d9d9"/>
<rect x="1181" y="287" width="1" height="686" fill="#d9d9d9"/>
<rect x="1288" y="287" width="1" height="686" fill="#d9d9d9"/>
<rect x="1395" y="287" width="1" height="686" fill="#d9d9d9"/>
<rect x="1502" y="287" width="1" height="686" fill="#d9d9d9"/>
<rect x="384" y="287" width="1" height="31" fill="#d9e1f2"/>
<rect x="534" y="287" width="1" height="31" fill="#d9e1f2"/>
<rect x="48" y="287" width="598" height="31" fill="#d9e1f2"/>
<rect x="383" y="254" width="1" height="32" fill="#c8c8c8"/>
<rect x="533" y="254" width="1" height="32" fill="#c8c8c8"/>
<rect x="646" y="254" width="1" height="32" fill="#c8c8c8"/>
<rect x="753" y="254" width="1" height="32" fill="#c8c8c8"/>
<rect x="860" y="254" width="1" height="32" fill="#c8c8c8"/>
<rect x="967" y="254" width="1" height="32" fill="#c8c8c8"/>
<rect x="1074" y="254" width="1" height="32" fill="#c8c8c8"/>
<rect x="1181" y="254" width="1" height="32" fill="#c8c8c8"/>
<rect x="1288" y="254" width="1" height="32" fill="#c8c8c8"/>
<rect x="1395" y="254" width="1" height="32" fill="#c8c8c8"/>
<rect x="1502" y="254" width="1" height="32" fill="#c8c8c8"/>
<rect x="0" y="286" width="1538" height="1" fill="#ababab"/>
<rect x="0" y="318" width="47" height="1" fill="#c8c8c8"/>
<rect x="0" y="350" width="47" height="1" fill="#c8c8c8"/>
<rect x="0" y="382" width="47" height="1" fill="#c8c8c8"/>
<rect x="0" y="414" width="47" height="1" fill="#c8c8c8"/>
<rect x="0" y="446" width="47" height="1" fill="#c8c8c8"/>
<rect x="0" y="478" width="47" height="1" fill="#c8c8c8"/>
<rect x="0" y="510" width="47" height="1" fill="#c8c8c8"/>
<rect x="0" y="542" width="47" height="1" fill="#c8c8c8"/>
<rect x="0" y="574" width="47" height="1" fill="#c8c8c8"/>
<rect x="0" y="606" width="47" height="1" fill="#c8c8c8"/>
<rect x="0" y="638" width="47" height="1" fill="#c8c8c8"/>
<rect x="0" y="670" width="47" height="1" fill="#c8c8c8"/>
<rect x="0" y="702" width="47" height="1" fill="#c8c8c8"/>
<rect x="0" y="734" width="47" height="1" fill="#c8c8c8"/>
<rect x="0" y="766" width="47" height="1" fill="#c8c8c8"/>
<rect x="0" y="798" width="47" height="1" fill="#c8c8c8"/>
<rect x="0" y="830" width="47" height="1" fill="#c8c8c8"/>
<rect x="0" y="862" width="47" height="1" fill="#c8c8c8"/>
<rect x="0" y="894" width="47" height="1" fill="#c8c8c8"/>
<rect x="0" y="926" width="47" height="1" fill="#c8c8c8"/>
<rect x="0" y="958" width="47" height="1" fill="#c8c8c8"/>
<rect x="47" y="254" width="1" height="719" fill="#ababab"/>
<path d="M44,259 L44,283 L20,283 Z" stroke="none" fill="#b4b4b4" stroke-width="1"/>
<rect x="0" y="511" width="47" height="31" fill="#d2d2d2"/>
<rect x="0" y="510" width="47" height="1" fill="#9f9f9f"/>
<rect x="0" y="542" width="47" height="1" fill="#9f9f9f"/>
<rect x="45" y="511" width="3" height="31" fill="#217346"/>
<text x="208.31" y="277.40" font-size="21.8" fill="#222">A</text>
<text x="450.87" y="277.40" font-size="21.8" fill="#222">B</text>
<text x="582.04" y="277.40" font-size="21.8" fill="#222">C</text>
<text x="691.72" y="277.40" font-size="21.8" fill="#222">D</text>
<text x="799.26" y="277.40" font-size="21.8" fill="#222">E</text>
<text x="906.91" y="277.40" font-size="21.8" fill="#222">F</text>
<text x="1012.83" y="277.40" font-size="21.8" fill="#222">G</text>
<text x="1120.15" y="277.40" font-size="21.8" fill="#222">H</text>
<text x="1231.95" y="277.40" font-size="21.8" fill="#222">I</text>
<text x="1337.10" y="277.40" font-size="21.8" fill="#222">J</text>
<text x="1441.04" y="277.40" font-size="21.8" fill="#222">K</text>
<text x="17.39" y="310.90" font-size="22.8" fill="#222">1</text>
<text x="17.62" y="342.90" font-size="22.8" fill="#222">2</text>
<text x="17.73" y="374.90" font-size="22.8" fill="#222">3</text>
<text x="17.73" y="406.90" font-size="22.8" fill="#222">4</text>
<text x="17.62" y="438.90" font-size="22.8" fill="#222">5</text>
<text x="17.62" y="470.90" font-size="22.8" fill="#222">6</text>
<text x="17.62" y="502.90" font-size="22.8" fill="#222">7</text>
<text x="17.73" y="534.90" font-size="22.8" fill="#217346">8</text>
<text x="17.62" y="566.90" font-size="22.8" fill="#222">9</text>
<text x="10.89" y="598.90" font-size="22.8" fill="#222">10</text>
<text x="11.92" y="630.90" font-size="22.8" fill="#222">11</text>
<text x="11.00" y="662.90" font-size="22.8" fill="#222">12</text>
<text x="11.00" y="694.90" font-size="22.8" fill="#222">13</text>
<text x="10.78" y="726.90" font-size="22.8" fill="#222">14</text>
<text x="10.89" y="758.90" font-size="22.8" fill="#222">15</text>
<text x="11.00" y="790.90" font-size="22.8" fill="#222">16</text>
<text x="11.00" y="822.90" font-size="22.8" fill="#222">17</text>
<text x="11.00" y="854.90" font-size="22.8" fill="#222">18</text>
<text x="11.00" y="886.90" font-size="22.8" fill="#222">19</text>
<text x="11.12" y="918.90" font-size="22.8" fill="#222">20</text>
<text x="11.23" y="950.90" font-size="22.8" fill="#222">21</text>
<text x="11.23" y="982.90" font-size="22.8" fill="#222">22</text>
<rect x="1538" y="287" width="1" height="687" fill="#9c9c9c"/>
<rect x="0" y="973" width="1539" height="1" fill="#9c9c9c"/>
<text x="289.63" y="311.00" font-size="23.5" fill="#000" font-weight="bold" textLength="115.81" lengthAdjust="spacingAndGlyphs">Milestones</text>
<text x="52.10" y="343.30" font-size="23.5" fill="#000" font-weight="bold" textLength="45.10" lengthAdjust="spacingAndGlyphs">Task</text>
<text x="386.74" y="343.30" font-size="23.5" fill="#000" font-weight="bold" textLength="51.45" lengthAdjust="spacingAndGlyphs">Date</text>
<text x="537.10" y="343.30" font-size="23.5" fill="#000" font-weight="bold" textLength="105.42" lengthAdjust="spacingAndGlyphs">Milestone</text>
<clipPath id="colA"><rect x="48" y="280" width="335" height="700"/></clipPath>
<text x="52.08" y="375.00" font-size="23.5" fill="#000" textLength="151.62" lengthAdjust="spacingAndGlyphs">Project Launch</text>
<text x="417.44" y="375.00" font-size="23.5" fill="#000" textLength="111.77" lengthAdjust="spacingAndGlyphs">6/20/2019</text>
<text x="628.54" y="375.00" font-size="23.5" fill="#000">4</text>
<text x="52.05" y="407.00" font-size="23.5" fill="#000" textLength="233.17" lengthAdjust="spacingAndGlyphs">Requirements Meeting</text>
<text x="417.44" y="407.00" font-size="23.5" fill="#000" textLength="111.77" lengthAdjust="spacingAndGlyphs">6/24/2019</text>
<text x="629.01" y="407.00" font-size="23.5" fill="#000">1</text>
<text x="52.12" y="439.00" font-size="23.5" fill="#000" textLength="181.95" lengthAdjust="spacingAndGlyphs">Design Developed</text>
<text x="417.44" y="439.00" font-size="23.5" fill="#000" textLength="111.77" lengthAdjust="spacingAndGlyphs">6/28/2019</text>
<text x="629.01" y="439.00" font-size="23.5" fill="#000">2</text>
<text x="52.15" y="471.00" font-size="23.5" fill="#000" textLength="146.24" lengthAdjust="spacingAndGlyphs">Design Review</text>
<text x="429.72" y="471.00" font-size="23.5" fill="#000" textLength="99.35" lengthAdjust="spacingAndGlyphs">7/1/2019</text>
<text x="628.54" y="471.00" font-size="23.5" fill="#000">4</text>
<text x="52.11" y="503.00" font-size="23.5" fill="#000" textLength="188.51" lengthAdjust="spacingAndGlyphs">Design Documents</text>
<text x="429.72" y="503.00" font-size="23.5" fill="#000" textLength="99.35" lengthAdjust="spacingAndGlyphs">7/3/2019</text>
<text x="629.01" y="503.00" font-size="23.5" fill="#000">2</text>
<text x="52.09" y="535.00" font-size="23.5" fill="#000" textLength="293.32" lengthAdjust="spacingAndGlyphs">Design Documents Approved</text>
<text x="429.72" y="535.00" font-size="23.5" fill="#000" textLength="99.35" lengthAdjust="spacingAndGlyphs">7/5/2019</text>
<text x="629.01" y="535.00" font-size="23.5" fill="#000">2</text>
<text x="52.40" y="567.00" font-size="23.5" fill="#000" textLength="254.86" lengthAdjust="spacingAndGlyphs">Application Development</text>
<text x="417.44" y="567.00" font-size="23.5" fill="#000" textLength="111.77" lengthAdjust="spacingAndGlyphs">7/26/2019</text>
<text x="629.01" y="567.00" font-size="23.5" fill="#000">3</text>
<text x="52.40" y="599.00" font-size="23.5" fill="#000" textLength="194.33" lengthAdjust="spacingAndGlyphs">Application Testing</text>
<text x="429.98" y="599.00" font-size="23.5" fill="#000" textLength="99.09" lengthAdjust="spacingAndGlyphs">8/2/2019</text>
<text x="629.01" y="599.00" font-size="23.5" fill="#000">2</text>
<text x="51.67" y="631.00" font-size="23.5" fill="#000" textLength="252.28" lengthAdjust="spacingAndGlyphs">Implementation &amp; Install</text>
<text x="429.98" y="631.00" font-size="23.5" fill="#000" textLength="99.09" lengthAdjust="spacingAndGlyphs">8/9/2019</text>
<text x="629.01" y="631.00" font-size="23.5" fill="#000">1</text>
<text x="52.40" y="663.00" font-size="23.5" fill="#000" textLength="326.74" lengthAdjust="spacingAndGlyphs">Application Validation Complete</text>
<text x="417.70" y="663.00" font-size="23.5" fill="#000" textLength="111.51" lengthAdjust="spacingAndGlyphs">8/16/2019</text>
<text x="628.54" y="663.00" font-size="23.5" fill="#000">4</text>
<text x="52.05" y="695.00" font-size="23.5" fill="#000" textLength="259.85" lengthAdjust="spacingAndGlyphs">Quality Validation Review</text>
<text x="417.70" y="695.00" font-size="23.5" fill="#000" textLength="111.51" lengthAdjust="spacingAndGlyphs">8/21/2019</text>
<text x="629.01" y="695.00" font-size="23.5" fill="#000">2</text>
<text x="52.09" y="727.00" font-size="23.5" fill="#000" textLength="269.31" lengthAdjust="spacingAndGlyphs">Project Closeout Complete</text>
<text x="417.70" y="727.00" font-size="23.5" fill="#000" textLength="111.51" lengthAdjust="spacingAndGlyphs">8/23/2019</text>
<text x="629.01" y="727.00" font-size="23.5" fill="#000">2</text>
<g clip-path="url(#colA)">
<text x="52.06" y="759.00" font-size="23.5" fill="#000" textLength="333.49" lengthAdjust="spacingAndGlyphs">Quality Project Review Complete</text>
</g>
<text x="417.70" y="759.00" font-size="23.5" fill="#000" textLength="111.51" lengthAdjust="spacingAndGlyphs">8/28/2019</text>
<text x="629.01" y="759.00" font-size="23.5" fill="#000">2</text>
<text x="52.06" y="791.00" font-size="23.5" fill="#000" textLength="256.35" lengthAdjust="spacingAndGlyphs">Project Closeout Meeting</text>
<text x="417.70" y="791.00" font-size="23.5" fill="#000" textLength="111.51" lengthAdjust="spacingAndGlyphs">8/30/2019</text>
<text x="628.54" y="791.00" font-size="23.5" fill="#000">4</text>
<line x1="47.5" y1="351" x2="384" y2="351" stroke="#1d6b3f" stroke-width="2" stroke-dasharray="9.5 2.5" stroke-dashoffset="3.3"/>
<line x1="48.25" y1="350" x2="48.25" y2="799" stroke="#1d6b3f" stroke-width="1.6" stroke-dasharray="6.5 2.5" stroke-dashoffset="6"/>
<line x1="383" y1="350" x2="383" y2="799" stroke="#1d6b3f" stroke-width="2" stroke-dasharray="6.7 2.3" stroke-dashoffset="4"/>
<line x1="47.5" y1="798" x2="384" y2="798" stroke="#1d6b3f" stroke-width="2" stroke-dasharray="6.7 2.3" stroke-dashoffset="1"/>
<path d="M252,778 h6.5 v4 h4 v6.5 h-4 v4.5 h-6.5 v-4.5 h-4 v-6.5 h4 z" stroke="#000" fill="#ffffff" stroke-width="1.6"/>
<clipPath id="chclip"><rect x="0" y="0" width="1537.5" height="1080"/></clipPath>
<g clip-path="url(#chclip)">
<rect x="667" y="324" width="900" height="482" fill="#ffffff"/>
<rect x="667" y="324" width="900" height="482" fill="none" stroke="#8a8a8a" stroke-width="1.6"/>
<rect x="730" y="753" width="900" height="2" fill="#bfbfbf"/>
<text x="691.31" y="786.00" font-size="19" fill="#595959" textLength="76.82" lengthAdjust="spacingAndGlyphs">6/4/2019</text>
<text x="778.17" y="786.00" font-size="19" fill="#595959" textLength="87.23" lengthAdjust="spacingAndGlyphs">6/14/2019</text>
<text x="870.17" y="786.00" font-size="19" fill="#595959" textLength="87.23" lengthAdjust="spacingAndGlyphs">6/24/2019</text>
<text x="967.31" y="786.00" font-size="19" fill="#595959" textLength="76.82" lengthAdjust="spacingAndGlyphs">7/4/2019</text>
<text x="1054.17" y="786.00" font-size="19" fill="#595959" textLength="87.23" lengthAdjust="spacingAndGlyphs">7/14/2019</text>
<text x="1146.17" y="786.00" font-size="19" fill="#595959" textLength="87.23" lengthAdjust="spacingAndGlyphs">7/24/2019</text>
<text x="1243.51" y="786.00" font-size="19" fill="#595959" textLength="76.62" lengthAdjust="spacingAndGlyphs">8/3/2019</text>
<text x="1330.37" y="786.00" font-size="19" fill="#595959" textLength="87.03" lengthAdjust="spacingAndGlyphs">8/13/2019</text>
<text x="1422.37" y="786.00" font-size="19" fill="#595959" textLength="87.03" lengthAdjust="spacingAndGlyphs">8/23/2019</text>
<text x="1519.31" y="786.00" font-size="19" fill="#595959" textLength="76.82" lengthAdjust="spacingAndGlyphs">9/2/2019</text>
<rect x="876.0" y="392.4" width="2" height="361.6" fill="#404040"/>
<rect x="872.0" y="752.8" width="10" height="1.6" fill="#404040"/>
<rect x="912.8" y="663.6" width="2" height="90.39999999999998" fill="#404040"/>
<rect x="908.8" y="752.8" width="10" height="1.6" fill="#404040"/>
<rect x="949.6" y="573.2" width="2" height="180.79999999999995" fill="#404040"/>
<rect x="945.6" y="752.8" width="10" height="1.6" fill="#404040"/>
<rect x="977.2" y="392.4" width="2" height="361.6" fill="#404040"/>
<rect x="973.2" y="752.8" width="10" height="1.6" fill="#404040"/>
<rect x="995.6" y="573.2" width="2" height="180.79999999999995" fill="#404040"/>
<rect x="991.6" y="752.8" width="10" height="1.6" fill="#404040"/>
<rect x="1014.0" y="573.2" width="2" height="180.79999999999995" fill="#404040"/>
<rect x="1010.0" y="752.8" width="10" height="1.6" fill="#404040"/>
<rect x="1207.2" y="482.79999999999995" width="2" height="271.20000000000005" fill="#404040"/>
<rect x="1203.2" y="752.8" width="10" height="1.6" fill="#404040"/>
<rect x="1271.6" y="573.2" width="2" height="180.79999999999995" fill="#404040"/>
<rect x="1267.6" y="752.8" width="10" height="1.6" fill="#404040"/>
<rect x="1336.0" y="663.6" width="2" height="90.39999999999998" fill="#404040"/>
<rect x="1332.0" y="752.8" width="10" height="1.6" fill="#404040"/>
<rect x="1400.4" y="392.4" width="2" height="361.6" fill="#404040"/>
<rect x="1396.4" y="752.8" width="10" height="1.6" fill="#404040"/>
<rect x="1446.4" y="573.2" width="2" height="180.79999999999995" fill="#404040"/>
<rect x="1442.4" y="752.8" width="10" height="1.6" fill="#404040"/>
<rect x="1464.8" y="573.2" width="2" height="180.79999999999995" fill="#404040"/>
<rect x="1460.8" y="752.8" width="10" height="1.6" fill="#404040"/>
<rect x="1510.8" y="573.2" width="2" height="180.79999999999995" fill="#404040"/>
<rect x="1506.8" y="752.8" width="10" height="1.6" fill="#404040"/>
<rect x="1529.1999999999998" y="392.4" width="2" height="361.6" fill="#404040"/>
<rect x="1525.1999999999998" y="752.8" width="10" height="1.6" fill="#404040"/>
<circle cx="877.0" cy="392.4" r="6.4" fill="#4472c4" stroke="none" stroke-width="1"/>
<circle cx="913.8" cy="663.6" r="6.4" fill="#4472c4" stroke="none" stroke-width="1"/>
<circle cx="950.6" cy="573.2" r="6.4" fill="#4472c4" stroke="none" stroke-width="1"/>
<circle cx="978.2" cy="392.4" r="6.4" fill="#4472c4" stroke="none" stroke-width="1"/>
<circle cx="996.6" cy="573.2" r="6.4" fill="#4472c4" stroke="none" stroke-width="1"/>
<circle cx="1015.0" cy="573.2" r="6.4" fill="#4472c4" stroke="none" stroke-width="1"/>
<circle cx="1208.2" cy="482.79999999999995" r="6.4" fill="#4472c4" stroke="none" stroke-width="1"/>
<circle cx="1272.6" cy="573.2" r="6.4" fill="#4472c4" stroke="none" stroke-width="1"/>
<circle cx="1337.0" cy="663.6" r="6.4" fill="#4472c4" stroke="none" stroke-width="1"/>
<circle cx="1401.4" cy="392.4" r="6.4" fill="#4472c4" stroke="none" stroke-width="1"/>
<circle cx="1447.4" cy="573.2" r="6.4" fill="#4472c4" stroke="none" stroke-width="1"/>
<circle cx="1465.8" cy="573.2" r="6.4" fill="#4472c4" stroke="none" stroke-width="1"/>
<circle cx="1511.8" cy="573.2" r="6.4" fill="#4472c4" stroke="none" stroke-width="1"/>
<circle cx="1530.1999999999998" cy="392.4" r="6.4" fill="#4472c4" stroke="none" stroke-width="1"/>
<rect x="865.5" y="349.5" width="24" height="32" fill="none" stroke="#8c8c8c" stroke-width="1"/>
<text x="871.77" y="372.00" font-size="19" fill="#404040">4</text>
<rect x="902.5" y="620.5" width="24" height="32" fill="none" stroke="#8c8c8c" stroke-width="1"/>
<text x="908.29" y="643.20" font-size="19" fill="#404040">1</text>
<rect x="939.5" y="530.5" width="23" height="32" fill="none" stroke="#8c8c8c" stroke-width="1"/>
<text x="945.28" y="552.80" font-size="19" fill="#404040">2</text>
<rect x="966.5" y="349.5" width="24" height="32" fill="none" stroke="#8c8c8c" stroke-width="1"/>
<text x="972.98" y="372.00" font-size="19" fill="#404040">4</text>
<rect x="985.5" y="530.5" width="23" height="32" fill="none" stroke="#8c8c8c" stroke-width="1"/>
<text x="991.28" y="552.80" font-size="19" fill="#404040">2</text>
<rect x="1003.5" y="530.5" width="24" height="32" fill="none" stroke="#8c8c8c" stroke-width="1"/>
<text x="1009.68" y="552.80" font-size="19" fill="#404040">2</text>
<rect x="1196.5" y="440.5" width="24" height="31" fill="none" stroke="#8c8c8c" stroke-width="1"/>
<text x="1202.98" y="462.40" font-size="19" fill="#404040">3</text>
<rect x="1261.5" y="530.5" width="23" height="32" fill="none" stroke="#8c8c8c" stroke-width="1"/>
<text x="1267.28" y="552.80" font-size="19" fill="#404040">2</text>
<rect x="1325.5" y="620.5" width="24" height="32" fill="none" stroke="#8c8c8c" stroke-width="1"/>
<text x="1331.49" y="643.20" font-size="19" fill="#404040">1</text>
<rect x="1390.5" y="349.5" width="23" height="32" fill="none" stroke="#8c8c8c" stroke-width="1"/>
<text x="1396.18" y="372.00" font-size="19" fill="#404040">4</text>
<rect x="1436.5" y="530.5" width="23" height="32" fill="none" stroke="#8c8c8c" stroke-width="1"/>
<text x="1442.08" y="552.80" font-size="19" fill="#404040">2</text>
<rect x="1454.5" y="530.5" width="24" height="32" fill="none" stroke="#8c8c8c" stroke-width="1"/>
<text x="1460.48" y="552.80" font-size="19" fill="#404040">2</text>
<rect x="1500.5" y="530.5" width="24" height="32" fill="none" stroke="#8c8c8c" stroke-width="1"/>
<text x="1506.48" y="552.80" font-size="19" fill="#404040">2</text>
<rect x="1518.5" y="349.5" width="24" height="32" fill="none" stroke="#8c8c8c" stroke-width="1"/>
<text x="1524.97" y="372.00" font-size="19" fill="#404040">4</text>
<circle cx="865.15" cy="349.30" r="3.6" fill="#b7d7f3" stroke="#1c86e0" stroke-width="1.3"/>
<circle cx="865.15" cy="380.70" r="3.6" fill="#b7d7f3" stroke="#1c86e0" stroke-width="1.3"/>
<circle cx="888.85" cy="349.30" r="3.6" fill="#b7d7f3" stroke="#1c86e0" stroke-width="1.3"/>
<circle cx="888.85" cy="380.70" r="3.6" fill="#b7d7f3" stroke="#1c86e0" stroke-width="1.3"/>
<circle cx="901.95" cy="620.50" r="3.6" fill="#b7d7f3" stroke="#1c86e0" stroke-width="1.3"/>
<circle cx="901.95" cy="651.90" r="3.6" fill="#b7d7f3" stroke="#1c86e0" stroke-width="1.3"/>
<circle cx="925.65" cy="620.50" r="3.6" fill="#b7d7f3" stroke="#1c86e0" stroke-width="1.3"/>
<circle cx="925.65" cy="651.90" r="3.6" fill="#b7d7f3" stroke="#1c86e0" stroke-width="1.3"/>
<circle cx="938.75" cy="530.10" r="3.6" fill="#b7d7f3" stroke="#1c86e0" stroke-width="1.3"/>
<circle cx="938.75" cy="561.50" r="3.6" fill="#b7d7f3" stroke="#1c86e0" stroke-width="1.3"/>
<circle cx="962.45" cy="530.10" r="3.6" fill="#b7d7f3" stroke="#1c86e0" stroke-width="1.3"/>
<circle cx="962.45" cy="561.50" r="3.6" fill="#b7d7f3" stroke="#1c86e0" stroke-width="1.3"/>
<circle cx="966.35" cy="349.30" r="3.6" fill="#b7d7f3" stroke="#1c86e0" stroke-width="1.3"/>
<circle cx="966.35" cy="380.70" r="3.6" fill="#b7d7f3" stroke="#1c86e0" stroke-width="1.3"/>
<circle cx="990.05" cy="349.30" r="3.6" fill="#b7d7f3" stroke="#1c86e0" stroke-width="1.3"/>
<circle cx="990.05" cy="380.70" r="3.6" fill="#b7d7f3" stroke="#1c86e0" stroke-width="1.3"/>
<circle cx="984.75" cy="530.10" r="3.6" fill="#b7d7f3" stroke="#1c86e0" stroke-width="1.3"/>
<circle cx="984.75" cy="561.50" r="3.6" fill="#b7d7f3" stroke="#1c86e0" stroke-width="1.3"/>
<circle cx="1008.45" cy="530.10" r="3.6" fill="#b7d7f3" stroke="#1c86e0" stroke-width="1.3"/>
<circle cx="1008.45" cy="561.50" r="3.6" fill="#b7d7f3" stroke="#1c86e0" stroke-width="1.3"/>
<circle cx="1003.15" cy="530.10" r="3.6" fill="#b7d7f3" stroke="#1c86e0" stroke-width="1.3"/>
<circle cx="1003.15" cy="561.50" r="3.6" fill="#b7d7f3" stroke="#1c86e0" stroke-width="1.3"/>
<circle cx="1026.85" cy="530.10" r="3.6" fill="#b7d7f3" stroke="#1c86e0" stroke-width="1.3"/>
<circle cx="1026.85" cy="561.50" r="3.6" fill="#b7d7f3" stroke="#1c86e0" stroke-width="1.3"/>
<circle cx="1196.35" cy="439.70" r="3.6" fill="#b7d7f3" stroke="#1c86e0" stroke-width="1.3"/>
<circle cx="1196.35" cy="471.10" r="3.6" fill="#b7d7f3" stroke="#1c86e0" stroke-width="1.3"/>
<circle cx="1220.05" cy="439.70" r="3.6" fill="#b7d7f3" stroke="#1c86e0" stroke-width="1.3"/>
<circle cx="1220.05" cy="471.10" r="3.6" fill="#b7d7f3" stroke="#1c86e0" stroke-width="1.3"/>
<circle cx="1260.75" cy="530.10" r="3.6" fill="#b7d7f3" stroke="#1c86e0" stroke-width="1.3"/>
<circle cx="1260.75" cy="561.50" r="3.6" fill="#b7d7f3" stroke="#1c86e0" stroke-width="1.3"/>
<circle cx="1284.45" cy="530.10" r="3.6" fill="#b7d7f3" stroke="#1c86e0" stroke-width="1.3"/>
<circle cx="1284.45" cy="561.50" r="3.6" fill="#b7d7f3" stroke="#1c86e0" stroke-width="1.3"/>
<circle cx="1325.15" cy="620.50" r="3.6" fill="#b7d7f3" stroke="#1c86e0" stroke-width="1.3"/>
<circle cx="1325.15" cy="651.90" r="3.6" fill="#b7d7f3" stroke="#1c86e0" stroke-width="1.3"/>
<circle cx="1348.85" cy="620.50" r="3.6" fill="#b7d7f3" stroke="#1c86e0" stroke-width="1.3"/>
<circle cx="1348.85" cy="651.90" r="3.6" fill="#b7d7f3" stroke="#1c86e0" stroke-width="1.3"/>
<circle cx="1389.55" cy="349.30" r="3.6" fill="#b7d7f3" stroke="#1c86e0" stroke-width="1.3"/>
<circle cx="1389.55" cy="380.70" r="3.6" fill="#b7d7f3" stroke="#1c86e0" stroke-width="1.3"/>
<circle cx="1413.25" cy="349.30" r="3.6" fill="#b7d7f3" stroke="#1c86e0" stroke-width="1.3"/>
<circle cx="1413.25" cy="380.70" r="3.6" fill="#b7d7f3" stroke="#1c86e0" stroke-width="1.3"/>
<circle cx="1435.55" cy="530.10" r="3.6" fill="#b7d7f3" stroke="#1c86e0" stroke-width="1.3"/>
<circle cx="1435.55" cy="561.50" r="3.6" fill="#b7d7f3" stroke="#1c86e0" stroke-width="1.3"/>
<circle cx="1459.25" cy="530.10" r="3.6" fill="#b7d7f3" stroke="#1c86e0" stroke-width="1.3"/>
<circle cx="1459.25" cy="561.50" r="3.6" fill="#b7d7f3" stroke="#1c86e0" stroke-width="1.3"/>
<circle cx="1453.95" cy="530.10" r="3.6" fill="#b7d7f3" stroke="#1c86e0" stroke-width="1.3"/>
<circle cx="1453.95" cy="561.50" r="3.6" fill="#b7d7f3" stroke="#1c86e0" stroke-width="1.3"/>
<circle cx="1477.65" cy="530.10" r="3.6" fill="#b7d7f3" stroke="#1c86e0" stroke-width="1.3"/>
<circle cx="1477.65" cy="561.50" r="3.6" fill="#b7d7f3" stroke="#1c86e0" stroke-width="1.3"/>
<circle cx="1499.95" cy="530.10" r="3.6" fill="#b7d7f3" stroke="#1c86e0" stroke-width="1.3"/>
<circle cx="1499.95" cy="561.50" r="3.6" fill="#b7d7f3" stroke="#1c86e0" stroke-width="1.3"/>
<circle cx="1523.65" cy="530.10" r="3.6" fill="#b7d7f3" stroke="#1c86e0" stroke-width="1.3"/>
<circle cx="1523.65" cy="561.50" r="3.6" fill="#b7d7f3" stroke="#1c86e0" stroke-width="1.3"/>
<circle cx="1518.35" cy="349.30" r="3.6" fill="#b7d7f3" stroke="#1c86e0" stroke-width="1.3"/>
<circle cx="1518.35" cy="380.70" r="3.6" fill="#b7d7f3" stroke="#1c86e0" stroke-width="1.3"/>
<circle cx="1542.05" cy="349.30" r="3.6" fill="#b7d7f3" stroke="#1c86e0" stroke-width="1.3"/>
<circle cx="1542.05" cy="380.70" r="3.6" fill="#b7d7f3" stroke="#1c86e0" stroke-width="1.3"/>
<circle cx="667" cy="324" r="5.8" fill="#ffffff" stroke="#8c8c8c" stroke-width="2"/>
<circle cx="1193" cy="324" r="5.8" fill="#ffffff" stroke="#8c8c8c" stroke-width="2"/>
<circle cx="667" cy="565" r="5.8" fill="#ffffff" stroke="#8c8c8c" stroke-width="2"/>
<circle cx="667" cy="806" r="5.8" fill="#ffffff" stroke="#8c8c8c" stroke-width="2"/>
<circle cx="1193" cy="806" r="5.8" fill="#ffffff" stroke="#8c8c8c" stroke-width="2"/>
</g>
<defs><filter id="dsh" x="-20%" y="-20%" width="140%" height="140%"><feGaussianBlur stdDeviation="6"/></filter></defs>
<rect x="908" y="366" width="274" height="160" fill="#000" opacity="0.22" filter="url(#dsh)"/>
<rect x="912" y="368" width="266" height="151" fill="#f0f0f0"/>
<rect x="913" y="369" width="264" height="37" fill="#ffffff"/>
<rect x="912.5" y="368.5" width="265" height="150" fill="none" stroke="#8a8a8a" stroke-width="1"/>
<text x="921.62" y="393.00" font-size="15.5" fill="#222" textLength="118.42" lengthAdjust="spacingAndGlyphs">Data Label Range</text>
<text x="1085.92" y="393.00" font-size="15" fill="#333" textLength="8.11" lengthAdjust="spacingAndGlyphs">?</text>
<path d="M1141.5,381.5 L1153,393 M1153,381.5 L1141.5,393" stroke="#333" fill="none" stroke-width="1.2"/>
<text x="920.66" y="429.00" font-size="13" fill="#222" textLength="141.35" lengthAdjust="spacingAndGlyphs">Select Data Label Range</text>
<rect x="920.5" y="436.5" width="249" height="24" fill="#ffffff" stroke="#a8a8a8" stroke-width="1"/>
<text x="924.27" y="453.70" font-size="13.5" fill="#111" textLength="119.90" lengthAdjust="spacingAndGlyphs">=Sheet1!$A$3:$A$16</text>
<rect x="1145" y="437" width="24" height="23" fill="#e6e6e6"/>
<rect x="1146.5" y="438.5" width="21" height="20" fill="#ffffff" stroke="#b4b4b4" stroke-width="1"/>
<path d="M1156.5,442 l-4.5,5 h3 v4 h3 v-4 h3 z" stroke="none" fill="#111" stroke-width="1"/>
<rect x="1151.5" y="452.5" width="10" height="1.8" fill="#111"/>
<rect x="984" y="481" width="86" height="28" fill="#e1e1e1"/>
<rect x="985.0" y="482.0" width="84" height="26" fill="none" stroke="#0078d7" stroke-width="2"/>
<text x="1017.78" y="499.80" font-size="14" fill="#111" textLength="17.80" lengthAdjust="spacingAndGlyphs">OK</text>
<rect x="1083" y="481" width="86" height="28" fill="#e1e1e1"/>
<rect x="1083.5" y="481.5" width="85" height="27" fill="none" stroke="#adadad" stroke-width="1"/>
<text x="1106.88" y="499.80" font-size="14" fill="#111" textLength="38.70" lengthAdjust="spacingAndGlyphs">Cancel</text>
<rect x="1539" y="254" width="381" height="749" fill="#e6e6e6"/>
<rect x="1542" y="256" width="19" height="717" fill="#dadada"/>
<rect x="1542.5" y="256.5" width="18" height="17" fill="#ffffff" stroke="#cfcfcf" stroke-width="1"/>
<path d="M1547,268 h9 l-4.5,-5 z" stroke="none" fill="#666" stroke-width="1"/>
<rect x="1542.5" y="275.5" width="18" height="645" fill="#ffffff" stroke="#bdbdbd" stroke-width="1"/>
<rect x="1542.5" y="955.5" width="18" height="17.5" fill="#ffffff" stroke="#cfcfcf" stroke-width="1"/>
<path d="M1547,962 h9 l-4.5,5 z" stroke="none" fill="#666" stroke-width="1"/>
<rect x="1564" y="256" width="1" height="744" fill="#b9b9b9"/>
<text x="1578.33" y="292.20" font-size="23.5" fill="#217346" textLength="226.67" lengthAdjust="spacingAndGlyphs">Format Data Labels</text>
<path d="M1835,280 h11 l-5.5,5 z" stroke="none" fill="#bcbcbc" stroke-width="1"/>
<path d="M1886.5,275.5 L1898,287 M1898,275.5 L1886.5,287" stroke="#444" fill="none" stroke-width="1.7"/>
<text x="1583.69" y="329.20" font-size="15.5" fill="#262626" font-weight="bold" textLength="96.54" lengthAdjust="spacingAndGlyphs">Label Options</text>
<path d="M1587,363 l10,-10 l10,10 l-10,10 z" stroke="#555" fill="#ffffff" stroke-width="1.4"/>
<path d="M1595,356 v-5 a2,2 0 0 1 4,0 v6" stroke="#555" fill="none" stroke-width="1.2"/>
<circle cx="1597" cy="358" r="1.4" fill="#555" stroke="none" stroke-width="1"/>
<path d="M1604,357 c5,0 8,3 8,8 l-2,5 c0,-5 -3,-8 -7,-8" stroke="none" fill="#555" stroke-width="1"/>
<path d="M1644.5,348.5 l11,8 l-4,12 h-14 l-4,-12 z" stroke="#555" fill="#ffffff" stroke-width="1.4"/>
<path d="M1638,369 l-2,5 M1651,369 l2,5" stroke="#555" fill="none" stroke-width="1.2"/>
<rect x="1637" y="369" width="15" height="3" fill="#ffffff"/>
<rect x="1685" y="356" width="19" height="19" rx="2" fill="#6d6d6d"/>
<path d="M1694.5,359 v13 M1688,365.5 h13 M1692.5,361 l2,-2 l2,2 M1692.5,370 l2,2 l2,-2 M1690,363.5 l-2,2 l2,2 M1699,363.5 l2,2 l-2,2" stroke="#ffffff" fill="none" stroke-width="1"/>
<path d="M1686,350 h18 M1686,348 v4 M1704,348 v4" stroke="#666" fill="none" stroke-width="1"/>
<path d="M1679,357 h4 M1679,374 h4 M1681,357 v17" stroke="#666" fill="none" stroke-width="1"/>
<rect x="1724" y="356" width="8.5" height="19" fill="#217346"/>
<rect x="1733.5" y="349" width="8" height="26" fill="#217346"/>
<rect x="1742.5" y="353" width="8" height="22" fill="#217346"/>
<path d="M1579,396.5 H1728 L1736,388 L1744,396.5 H1905" stroke="#c6c6c6" fill="none" stroke-width="1"/>
<path d="M1596.5,408.5 v9 h-9 z" stroke="none" fill="#444" stroke-width="1"/>
<text x="1604.28" y="418.70" font-size="15.5" fill="#217346" font-weight="bold" textLength="97.05" lengthAdjust="spacingAndGlyphs">Label Options</text>
<text x="1604.12" y="444.20" font-size="15" fill="#444" textLength="98.03" lengthAdjust="spacingAndGlyphs">Label Contains</text>
<rect x="1615.5" y="458.5" width="15" height="15" fill="#fdfdfd" stroke="#8f8f8f" stroke-width="1"/>
<path d="M1618.5,466.5 l3,3.2 l6,-7" stroke="#444" fill="none" stroke-width="1.4"/>
<rect x="1676.81" y="471.60" width="8.72" height="1.1" fill="#444"/>
<text x="1637.40" y="470.30" font-size="15" fill="#444" textLength="108.39" lengthAdjust="spacingAndGlyphs">Value From Cells</text>
<rect x="1615.5" y="488.5" width="15" height="15" fill="#fdfdfd" stroke="#8f8f8f" stroke-width="1"/>
<rect x="1636.68" y="502.55" width="9.65" height="1.1" fill="#444"/>
<text x="1636.68" y="501.25" font-size="15" fill="#444" textLength="83.64" lengthAdjust="spacingAndGlyphs">Series Name</text>
<rect x="1615.5" y="519.5" width="15" height="15" fill="#fdfdfd" stroke="#8f8f8f" stroke-width="1"/>
<rect x="1637.11" y="533.50" width="9.57" height="1.1" fill="#444"/>
<text x="1637.11" y="532.20" font-size="15" fill="#444" textLength="49.18" lengthAdjust="spacingAndGlyphs">X Value</text>
<rect x="1615.5" y="550.5" width="15" height="15" fill="#fdfdfd" stroke="#8f8f8f" stroke-width="1"/>
<path d="M1618.5,558.5 l3,3.2 l6,-7" stroke="#444" fill="none" stroke-width="1.4"/>
<rect x="1637.12" y="564.45" width="9.39" height="1.1" fill="#444"/>
<text x="1637.12" y="563.15" font-size="15" fill="#444" textLength="47.99" lengthAdjust="spacingAndGlyphs">Y Value</text>
<rect x="1615.5" y="581.5" width="15" height="15" fill="#fdfdfd" stroke="#8f8f8f" stroke-width="1"/>
<path d="M1618.5,589.5 l3,3.2 l6,-7" stroke="#444" fill="none" stroke-width="1.4"/>
<rect x="1646.24" y="595.40" width="7.97" height="1.1" fill="#444"/>
<text x="1636.68" y="594.10" font-size="15" fill="#444" textLength="122.66" lengthAdjust="spacingAndGlyphs">Show Leader Lines</text>
<rect x="1615.5" y="612.5" width="15" height="15" fill="#fdfdfd" stroke="#8f8f8f" stroke-width="1"/>
<rect x="1636.23" y="626.35" width="8.13" height="1.1" fill="#444"/>
<text x="1636.23" y="625.05" font-size="15" fill="#444" textLength="75.58" lengthAdjust="spacingAndGlyphs">Legend key</text>
<rect x="1624.72" y="660.20" width="8.22" height="1.1" fill="#444"/>
<text x="1614.86" y="658.90" font-size="15" fill="#444" textLength="64.91" lengthAdjust="spacingAndGlyphs">Separator</text>
<rect x="1773.5" y="641.5" width="107" height="23" fill="#ffffff" stroke="#b4b4b4" stroke-width="1"/>
<path d="M1867,651.5 h11 l-5.5,5.5 z" stroke="none" fill="#666" stroke-width="1"/>
<text x="1780.20" y="657.00" font-size="12" fill="#555" textLength="5.56" lengthAdjust="spacingAndGlyphs">,</text>
<rect x="1615.5" y="671.5" width="124" height="29" fill="#ffffff" stroke="#b4b4b4" stroke-width="1"/>
<rect x="1623.24" y="692.00" width="10.46" height="1.1" fill="#444"/>
<text x="1623.24" y="690.70" font-size="15" fill="#444" textLength="107.61" lengthAdjust="spacingAndGlyphs">Reset Label Text</text>
<text x="1604.41" y="722.40" font-size="15" fill="#444" textLength="93.21" lengthAdjust="spacingAndGlyphs">Label Position</text>
<circle cx="1623.2" cy="751.50" r="6.8" fill="#ffffff" stroke="#a6a6a6" stroke-width="1.2"/>
<rect x="1636.38" y="758.30" width="10.46" height="1.1" fill="#444"/>
<text x="1636.38" y="757.00" font-size="15" fill="#444" textLength="43.49" lengthAdjust="spacingAndGlyphs">Center</text>
<circle cx="1623.2" cy="780.53" r="6.8" fill="#ffffff" stroke="#a6a6a6" stroke-width="1.2"/>
<rect x="1653.11" y="787.33" width="4.31" height="1.1" fill="#444"/>
<text x="1635.86" y="786.03" font-size="15" fill="#444" textLength="25.86" lengthAdjust="spacingAndGlyphs">Left</text>
<circle cx="1623.2" cy="809.56" r="6.8" fill="#ffffff" stroke="#a6a6a6" stroke-width="1.2"/>
<rect x="1635.86" y="816.36" width="11.20" height="1.1" fill="#444"/>
<text x="1635.86" y="815.06" font-size="15" fill="#444" textLength="36.21" lengthAdjust="spacingAndGlyphs">Right</text>
<circle cx="1623.2" cy="838.59" r="6.8" fill="#ffffff" stroke="#a6a6a6" stroke-width="1.2"/>
<circle cx="1623.2" cy="838.59" r="3.6" fill="#707070" stroke="none" stroke-width="1"/>
<rect x="1655.78" y="845.39" width="8.49" height="1.1" fill="#444"/>
<text x="1637.10" y="844.09" font-size="15" fill="#444" textLength="43.29" lengthAdjust="spacingAndGlyphs">Above</text>
<circle cx="1623.2" cy="867.62" r="6.8" fill="#ffffff" stroke="#a6a6a6" stroke-width="1.2"/>
<rect x="1666.87" y="874.42" width="11.19" height="1.1" fill="#444"/>
<text x="1635.86" y="873.12" font-size="15" fill="#444" textLength="42.20" lengthAdjust="spacingAndGlyphs">Below</text>
<path d="M1589.5,900.5 l5.5,5.2 l-5.5,5.2 z" stroke="#666" fill="#ffffff" stroke-width="1"/>
<text x="1604.52" y="912.00" font-size="15.5" fill="#333" font-weight="bold" textLength="58.21" lengthAdjust="spacingAndGlyphs">Number</text>
<rect x="0" y="974" width="1539" height="28" fill="#e6e6e6"/>
<rect x="0" y="973" width="1539" height="1" fill="#bcbcbc"/>
<path d="M33,984 v9 l-5,-4.5 z" stroke="none" fill="#c4c4c4" stroke-width="1"/>
<path d="M57,984 v9 l5,-4.5 z" stroke="none" fill="#c4c4c4" stroke-width="1"/>
<rect x="103" y="973" width="79" height="26" fill="#ffffff"/>
<rect x="103" y="973" width="1" height="26" fill="#bcbcbc"/>
<rect x="181" y="973" width="1" height="26" fill="#bcbcbc"/>
<rect x="103" y="997" width="79" height="2" fill="#217346"/>
<text x="114.81" y="989.80" font-size="16.5" fill="#217346" font-weight="bold" textLength="54.07" lengthAdjust="spacingAndGlyphs">Sheet1</text>
<circle cx="225" cy="988" r="9.3" fill="none" stroke="#666" stroke-width="1.2"/>
<path d="M225,983 v10 M220,988 h10" stroke="#555" fill="none" stroke-width="1.6"/>
<rect x="935.5" y="983" width="3" height="3" fill="#a0a0a0"/>
<rect x="935.5" y="987.5" width="3" height="3" fill="#a0a0a0"/>
<rect x="935.5" y="992" width="3" height="3" fill="#a0a0a0"/>
<rect x="954" y="978" width="587" height="19" fill="#dadada"/>
<rect x="954.5" y="978.5" width="18" height="18" fill="#ffffff" stroke="#cfcfcf" stroke-width="1"/>
<path d="M966,983 v9 l-5,-4.5 z" stroke="none" fill="#666" stroke-width="1"/>
<rect x="972.5" y="978.5" width="444" height="17" fill="#ffffff" stroke="#bdbdbd" stroke-width="1"/>
<rect x="1522.5" y="978.5" width="18" height="18" fill="#ffffff" stroke="#cfcfcf" stroke-width="1"/>
<path d="M1529,983 v9 l5,-4.5 z" stroke="none" fill="#666" stroke-width="1"/>
<rect x="0" y="1002" width="1920" height="28" fill="#f3f3f3"/>
<rect x="0" y="1002" width="1920" height="1" fill="#d4d4d4"/>
<text x="7.36" y="1020.80" font-size="13.5" fill="#444" textLength="29.66" lengthAdjust="spacingAndGlyphs">Point</text>
<circle cx="69" cy="1011.5" r="3.2" fill="#666" stroke="none" stroke-width="1"/>
<rect x="66.6" y="1010.6" width="12.8" height="11.8" fill="none" stroke="#777" stroke-width="1.2"/>
<rect x="70" y="1010" width="10" height="3" fill="#777"/>
<rect x="68.5" y="1015.5" width="1.5" height="1.5" fill="#777"/>
<rect x="71.5" y="1015.5" width="1.5" height="1.5" fill="#777"/>
<rect x="74.5" y="1015.5" width="1.5" height="1.5" fill="#777"/>
<rect x="77.5" y="1015.5" width="1.5" height="1.5" fill="#777"/>
<rect x="68.5" y="1018.5" width="1.5" height="1.5" fill="#777"/>
<rect x="71.5" y="1018.5" width="1.5" height="1.5" fill="#777"/>
<rect x="74.5" y="1018.5" width="1.5" height="1.5" fill="#777"/>
<rect x="77.5" y="1018.5" width="1.5" height="1.5" fill="#777"/>
<rect x="1597.65" y="1008.65" width="14.7" height="14.7" fill="none" stroke="#6a6a6a" stroke-width="1.3"/>
<path d="M1602.3,1008 v16 M1607.7,1008 v16 M1597,1013.3 h16 M1597,1018.7 h16" stroke="#6a6a6a" fill="none" stroke-width="1.1"/>
<rect x="1638.65" y="1008.65" width="15.7" height="14.7" fill="none" stroke="#6a6a6a" stroke-width="1.3"/>
<rect x="1642.55" y="1011.05" width="7.9" height="9.9" fill="none" stroke="#6a6a6a" stroke-width="1.1"/>
<path d="M1644,1013.5 h5 M1644,1016 h5 M1644,1018.5 h5" stroke="#6a6a6a" fill="none" stroke-width="1"/>
<rect x="1680.65" y="1008.65" width="15.7" height="14.7" fill="none" stroke="#6a6a6a" stroke-width="1.3"/>
<path d="M1685,1008 v7 M1689,1008 v7 h8" stroke="#6a6a6a" fill="none" stroke-width="1.2"/>
<rect x="1715" y="1014.5" width="10" height="2" fill="#6a6a6a"/>
<rect x="1729" y="1015.5" width="125" height="1.3" fill="#a8a8a8"/>
<rect x="1791" y="1011" width="1.3" height="9" fill="#888"/>
<path d="M1858,1016 h10 M1863,1011 v10" stroke="#555" fill="none" stroke-width="2"/>
<text x="1880.14" y="1021.00" font-size="13.5" fill="#b6b6b6" textLength="31.32" lengthAdjust="spacingAndGlyphs">134%</text>
<rect x="0" y="1030" width="1920" height="50" fill="#0a0a0a"/>
<path d="M20,1046.5 L28.8,1045.3 V1054 H20 Z M30,1045.1 L40.4,1043.7 V1054 H30 Z M20,1055.2 H28.8 V1064 L20,1062.8 Z M30,1055.2 H40.4 V1065.5 L30,1064.1 Z" stroke="none" fill="#ffffff" stroke-width="1"/>
<rect x="60" y="1030" width="430" height="50" fill="#f0f0f0"/>
<rect x="60" y="1030" width="430" height="1" fill="#b8b8b8"/>
<circle cx="84.6" cy="1055.3" r="12" fill="none" stroke="#111" stroke-width="3.2"/>
<text x="110.35" y="1061.80" font-size="18" fill="#333" textLength="153.02" lengthAdjust="spacingAndGlyphs">Type here to search</text>
<rect x="460" y="1045" width="8" height="13" rx="4" fill="none" stroke="#333" stroke-width="1.6"/>
<path d="M457,1054 a7,7 0 0 0 14,0 M464,1061 v5 M460,1066 h8" stroke="#333" fill="none" stroke-width="1.5"/>
<path d="M510,1045 h11 M510,1064 h11 M511.5,1048 h8 v13 h-8 z M527.5,1045 v19" stroke="#ffffff" fill="none" stroke-width="1.3"/>
<rect x="525.5" y="1052" width="4" height="4" fill="#ffffff"/>
<path d="M573,1058 c0,-10 8,-16 14,-16 c7,0 10,5 9,12 h-17 c0,6 4,9 9,9 c3,0 6,-1 8,-2 v5 c-2,1 -5,2 -9,2 c-8,0 -14,-4 -14,-10 z M579,1050 h10 c0,-3 -2,-5 -5,-5 c-3,0 -5,2 -5,5 z" stroke="none" fill="#1e7ad6" stroke-width="1"/>
<rect x="632" y="1045" width="27" height="21" fill="#f6c76a"/>
<rect x="632" y="1043" width="12" height="4" fill="#e8b04f"/>
<rect x="637" y="1046" width="10" height="3" fill="#ffffff"/>
<path d="M638,1066 v-7 a8,6 0 0 1 16,0 v7 h-4 v-4 h-8 v4 z" stroke="none" fill="#3d8ede" stroke-width="1"/>
<rect x="621" y="1077" width="51" height="3" fill="#76b9ed"/>
<path d="M693,1048 h29 v21 h-29 z" stroke="none" fill="#ffffff" stroke-width="1"/>
<path d="M701,1048 v-3 a6.5,6.5 0 0 1 13,0 v3" stroke="#ffffff" fill="none" stroke-width="1.6"/>
<rect x="701" y="1052" width="6" height="6" fill="#e74c3c"/>
<rect x="708" y="1052" width="6" height="6" fill="#4c8b2b"/>
<rect x="701" y="1059" width="6" height="6" fill="#1e88e5"/>
<rect x="708" y="1059" width="6" height="6" fill="#e0962b"/>
<path d="M755,1055 l15,-12 l15,12 v11 h-30 z" stroke="none" fill="#ffffff" stroke-width="1"/>
<path d="M755,1055 l15,10 l15,-10" stroke="#0a0a0a" fill="none" stroke-width="1.2"/>
<rect x="765.5" y="1054.5" width="35" height="21" rx="10.5" fill="#3a3a3a" stroke="#666" stroke-width="1"/>
<text x="769.52" y="1070.50" font-size="15" fill="#ffffff" font-weight="bold" textLength="27.22" lengthAdjust="spacingAndGlyphs">99+</text>
<rect x="823" y="1040" width="18" height="30" fill="#3a8fd8"/>
<rect x="823" y="1062" width="18" height="8" fill="#2a6fb8"/>
<circle cx="847" cy="1064" r="10.5" fill="#2d2d2d" stroke="#777" stroke-width="1"/>
<path d="M841.5,1060 h11 v8 h-11 z M841.5,1060 l5.5,4.5 l5.5,-4.5" stroke="#ffffff" fill="none" stroke-width="1.2"/>
<circle cx="895.5" cy="1056.5" r="15" fill="#db4437" stroke="none" stroke-width="1"/>
<path d="M895.5,1056.5 L882.5,1064 A15,15 0 0 0 903,1069.5 Z" stroke="none" fill="#0f9d58" stroke-width="1"/>
<path d="M895.5,1056.5 L903,1069.5 A15,15 0 0 0 910.5,1056.5 Z" stroke="none" fill="#f4b400" stroke-width="1"/>
<circle cx="895.5" cy="1056.5" r="6.5" fill="#ffffff" stroke="none" stroke-width="1"/>
<circle cx="895.5" cy="1056.5" r="5" fill="#4285f4" stroke="none" stroke-width="1"/>
<circle cx="901" cy="1062" r="9" fill="#4a4a4a" stroke="none" stroke-width="1"/>
<rect x="869" y="1077" width="51" height="3" fill="#76b9ed"/>
<rect x="941" y="1040" width="30" height="30" rx="7" fill="#ef3939"/>
<circle cx="956" cy="1055" r="10.5" fill="#ffffff" stroke="none" stroke-width="1"/>
<path d="M950,1051 l6,10 l5,-9" stroke="#ef3939" fill="none" stroke-width="3"/>
<rect x="931" y="1077" width="51" height="3" fill="#76b9ed"/>
<defs><linearGradient id="npg" x1="0" y1="1" x2="1" y2="0"><stop offset="0" stop-color="#4f8fc9"/><stop offset="0.55" stop-color="#a9d0ee"/><stop offset="1" stop-color="#f2f6fa"/></linearGradient></defs>
<path d="M1004.5,1061 L1013.5,1043.5 L1031,1048.5 L1025.5,1067.5 Z" stroke="#e8e8e8" fill="url(#npg)" stroke-width="1.2"/>
<path d="M1013.5,1043.5 L1031,1048.5" stroke="#9a9a9a" fill="none" stroke-width="2.5"/>
<path d="M1028,1050 l3,18 l-4,1" stroke="#c8c8c8" fill="none" stroke-width="1.2"/>
<rect x="993" y="1077" width="51" height="3" fill="#76b9ed"/>
<rect x="1050" y="1030" width="61" height="47" fill="#333333"/>
<rect x="1071" y="1041" width="23" height="27" fill="#21a366"/>
<rect x="1071" y="1054" width="23" height="14" fill="#107c41"/>
<rect x="1064" y="1047" width="15" height="15" fill="#185c37"/>
<text x="1067.38" y="1059.00" font-size="11.5" fill="#ffffff" font-weight="bold" textLength="8.21" lengthAdjust="spacingAndGlyphs">X</text>
<rect x="1050" y="1077" width="61" height="3" fill="#76b9ed"/>
<path d="M1130,1052 l8,-7 l6,5 l8,-4 l2,8 l-4,5 l4,8 l-6,2 l-5,-5 l-6,5 l-4,-3 l3,-6 z" stroke="none" fill="#c0461e" stroke-width="1"/>
<circle cx="1134" cy="1049" r="4" fill="#c9c9c9" stroke="none" stroke-width="1"/>
<rect x="1117" y="1077" width="51" height="3" fill="#76b9ed"/>
<text x="1467.03" y="1060.00" font-size="15.5" fill="#d0d0d0" textLength="56.06" lengthAdjust="spacingAndGlyphs">Desktop</text>
<path d="M1533,1038 l3,3.5 l-3,3.5 M1538,1038 l3,3.5 l-3,3.5" stroke="#ffffff" fill="none" stroke-width="1.2"/>
<circle cx="1585" cy="1049" r="3.5" fill="none" stroke="#ffffff" stroke-width="1.3"/>
<circle cx="1576" cy="1054" r="3.5" fill="none" stroke="#ffffff" stroke-width="1.3"/>
<path d="M1579,1060 a6,6 0 0 1 12,0 M1570,1063 a6,6 0 0 1 12,0" stroke="#ffffff" fill="none" stroke-width="1.3"/>
<path d="M1622,1059 l8,-8 l8,8" stroke="#ffffff" fill="none" stroke-width="1.4"/>
<rect x="1663.65" y="1050.65" width="14.7" height="9.7" fill="none" stroke="#ffffff" stroke-width="1.3"/>
<rect x="1665" y="1052" width="12" height="7" fill="#ffffff"/>
<rect x="1679" y="1053.5" width="2" height="4" fill="#ffffff"/>
<path d="M1661,1049 v5 M1659,1049 v3 h4 v-3" stroke="#ffffff" fill="none" stroke-width="1.1"/>
<path d="M1703,1063 a16,16 0 0 1 16,-16 M1707,1063 a12,12 0 0 1 12,-12 M1711,1063 a8,8 0 0 1 8,-8" stroke="#ffffff" fill="none" stroke-width="1.4"/>
<circle cx="1716" cy="1061" r="1.6" fill="#ffffff" stroke="none" stroke-width="1"/>
<path d="M1740,1051 h4 l6,-5 v18 l-6,-5 h-4 z" stroke="#ffffff" fill="none" stroke-width="1.3"/>
<path d="M1753,1051 a5,5 0 0 1 0,8 M1756,1048 a9,9 0 0 1 0,14 M1759,1045 a13,13 0 0 1 0,20" stroke="#ffffff" fill="none" stroke-width="1.2"/>
<text x="1785.68" y="1048.75" font-size="15.5" fill="#ffffff" textLength="53.01" lengthAdjust="spacingAndGlyphs">8:20 PM</text>
<text x="1777.22" y="1071.25" font-size="15.5" fill="#ffffff" textLength="69.03" lengthAdjust="spacingAndGlyphs">6/27/2019</text>
<path d="M1869,1045 h20 v14 h-10 l-4,4 v-4 h-6 z" stroke="none" fill="#ffffff" stroke-width="1"/>
<path d="M1872,1049 h14 M1872,1052 h14 M1872,1055 h10" stroke="#0a0a0a" fill="none" stroke-width="1"/>
<circle cx="1888.5" cy="1064.5" r="9.5" fill="#2a2a2a" stroke="#888" stroke-width="1.2"/>
<text x="1884.01" y="1070.00" font-size="14" fill="#ffffff" font-weight="bold" textLength="9.08" lengthAdjust="spacingAndGlyphs">2</text>
<rect x="1914" y="1030" width="1" height="50" fill="#555"/>
</svg>
</body></html>
